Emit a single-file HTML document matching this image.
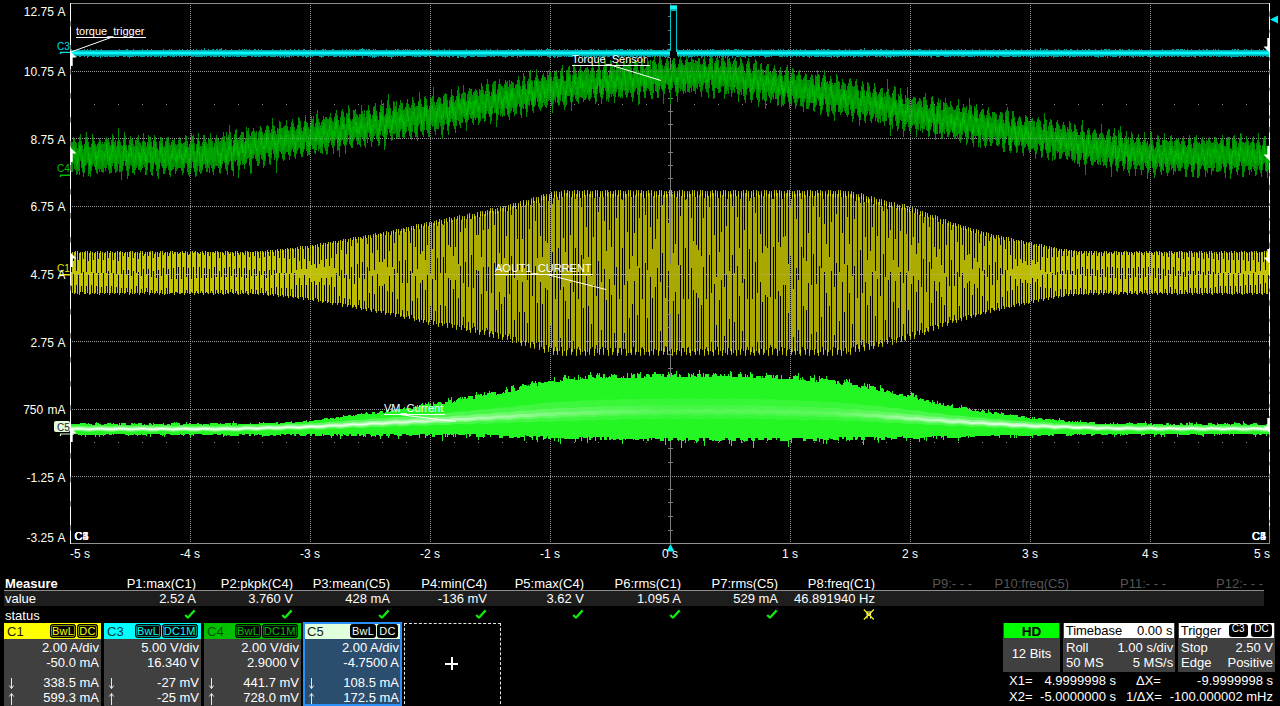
<!DOCTYPE html><html><head><meta charset="utf-8"><title>scope</title><style>
html,body{margin:0;padding:0;background:#000;}
body{width:1280px;height:706px;overflow:hidden;position:relative;font-family:"Liberation Sans",sans-serif;font-size:13px;color:#fff;line-height:15px;}
#plot{position:absolute;left:0;top:0;}
.abs{position:absolute;}
.mh,.mv,.ms{position:absolute;width:97px;text-align:right;white-space:nowrap;}
.mh{top:576px;height:14px;overflow:hidden;}
.mv{top:591px;}
.ms{top:606px;height:16px;}
.dim{color:#555;}
#mline{position:absolute;left:4px;top:590px;width:1260px;height:1px;background:#8e8e8e;}
#vbg{position:absolute;left:4px;top:591px;width:1260px;height:15px;background:#1e1e1e;}
.ch{position:absolute;top:623px;width:97px;height:83px;background:#404040;overflow:hidden;}
.ch .hd{position:absolute;left:0;top:0;width:97px;height:15.5px;}
.ch .nm{position:absolute;left:3px;top:0.5px;font-size:13px;}
.tag{position:absolute;top:.5px;height:14.5px;box-sizing:border-box;border-radius:2.5px;background:#000;font-size:11px;line-height:12.5px;text-align:center;border:1px solid #000;letter-spacing:.2px;}
.tag.nb:before{display:none;}
.tag:before{content:'';position:absolute;left:0;top:0;right:0;bottom:0;border-radius:2px;border:1px solid currentColor;opacity:.55;}
.tg{position:absolute;top:1px;height:13px;border-radius:3px;background:#000;color:#fff;font-size:10px;line-height:10px;text-align:center;}
.r{position:absolute;right:2px;white-space:nowrap;text-align:right;}
.l{position:absolute;left:3px;white-space:nowrap;}
.pn{position:absolute;top:623px;background:#404040;height:48.8px;}
.pn .hd{position:absolute;left:.7px;top:0;right:.8px;height:14.8px;background:#fff;color:#000;}
.pn .hd .l{left:2px;}
.ck{position:absolute;top:609px;}
</style></head><body>
<svg id="plot" width="1280" height="570" viewBox="0 0 1280 570">
<defs><filter id="bl" x="0" y="-1" width="1" height="3"><feGaussianBlur stdDeviation="0.6"/></filter><linearGradient id="w3" x1="70" x2="1270" y1="0" y2="0" gradientUnits="userSpaceOnUse"><stop offset="0.000" stop-color="#fff" stop-opacity="0.80"/><stop offset="0.200" stop-color="#fff" stop-opacity="0.80"/><stop offset="0.267" stop-color="#fff" stop-opacity="0.66"/><stop offset="0.333" stop-color="#fff" stop-opacity="0.42"/><stop offset="0.400" stop-color="#fff" stop-opacity="0.20"/><stop offset="0.500" stop-color="#fff" stop-opacity="0.08"/><stop offset="0.633" stop-color="#fff" stop-opacity="0.10"/><stop offset="0.667" stop-color="#fff" stop-opacity="0.20"/><stop offset="0.733" stop-color="#fff" stop-opacity="0.50"/><stop offset="0.800" stop-color="#fff" stop-opacity="0.75"/><stop offset="0.867" stop-color="#fff" stop-opacity="0.80"/><stop offset="1.000" stop-color="#fff" stop-opacity="0.80"/></linearGradient><linearGradient id="w2" x1="70" x2="1270" y1="0" y2="0" gradientUnits="userSpaceOnUse"><stop offset="0.000" stop-color="#fff" stop-opacity="0.55"/><stop offset="0.200" stop-color="#fff" stop-opacity="0.55"/><stop offset="0.267" stop-color="#fff" stop-opacity="0.42"/><stop offset="0.333" stop-color="#fff" stop-opacity="0.28"/><stop offset="0.400" stop-color="#fff" stop-opacity="0.16"/><stop offset="0.500" stop-color="#fff" stop-opacity="0.08"/><stop offset="0.633" stop-color="#fff" stop-opacity="0.10"/><stop offset="0.667" stop-color="#fff" stop-opacity="0.16"/><stop offset="0.733" stop-color="#fff" stop-opacity="0.34"/><stop offset="0.800" stop-color="#fff" stop-opacity="0.50"/><stop offset="0.867" stop-color="#fff" stop-opacity="0.55"/><stop offset="1.000" stop-color="#fff" stop-opacity="0.55"/></linearGradient><linearGradient id="w1" x1="70" x2="1270" y1="0" y2="0" gradientUnits="userSpaceOnUse"><stop offset="0.000" stop-color="#fff" stop-opacity="0.30"/><stop offset="0.200" stop-color="#fff" stop-opacity="0.30"/><stop offset="0.267" stop-color="#fff" stop-opacity="0.24"/><stop offset="0.333" stop-color="#fff" stop-opacity="0.17"/><stop offset="0.400" stop-color="#fff" stop-opacity="0.12"/><stop offset="0.500" stop-color="#fff" stop-opacity="0.08"/><stop offset="0.633" stop-color="#fff" stop-opacity="0.09"/><stop offset="0.667" stop-color="#fff" stop-opacity="0.12"/><stop offset="0.733" stop-color="#fff" stop-opacity="0.20"/><stop offset="0.800" stop-color="#fff" stop-opacity="0.28"/><stop offset="0.867" stop-color="#fff" stop-opacity="0.30"/><stop offset="1.000" stop-color="#fff" stop-opacity="0.30"/></linearGradient></defs>
<g stroke="#808080" stroke-width="1" stroke-dasharray="1 1" shape-rendering="crispEdges" fill="none"><path d="M190.5 5 V543"/><path d="M310.5 5 V543"/><path d="M430.5 5 V543"/><path d="M550.5 5 V543"/><path d="M790.5 5 V543"/><path d="M910.5 5 V543"/><path d="M1030.5 5 V543"/><path d="M1150.5 5 V543"/><path d="M72 71.5 H1269"/><path d="M72 138.5 H1269"/><path d="M72 206.5 H1269"/><path d="M72 274.5 H1269"/><path d="M72 341.5 H1269"/><path d="M72 409.5 H1269"/><path d="M72 476.5 H1269"/></g>
<g fill="#8c8c8c" shape-rendering="crispEdges"><rect x="94" y="104" width="1" height="1"/><rect x="118" y="104" width="1" height="1"/><rect x="142" y="104" width="1" height="1"/><rect x="166" y="104" width="1" height="1"/><rect x="214" y="104" width="1" height="1"/><rect x="238" y="104" width="1" height="1"/><rect x="262" y="104" width="1" height="1"/><rect x="286" y="104" width="1" height="1"/><rect x="334" y="104" width="1" height="1"/><rect x="358" y="104" width="1" height="1"/><rect x="382" y="104" width="1" height="1"/><rect x="406" y="104" width="1" height="1"/><rect x="454" y="104" width="1" height="1"/><rect x="478" y="104" width="1" height="1"/><rect x="502" y="104" width="1" height="1"/><rect x="526" y="104" width="1" height="1"/><rect x="574" y="104" width="1" height="1"/><rect x="598" y="104" width="1" height="1"/><rect x="622" y="104" width="1" height="1"/><rect x="646" y="104" width="1" height="1"/><rect x="694" y="104" width="1" height="1"/><rect x="718" y="104" width="1" height="1"/><rect x="742" y="104" width="1" height="1"/><rect x="766" y="104" width="1" height="1"/><rect x="814" y="104" width="1" height="1"/><rect x="838" y="104" width="1" height="1"/><rect x="862" y="104" width="1" height="1"/><rect x="886" y="104" width="1" height="1"/><rect x="934" y="104" width="1" height="1"/><rect x="958" y="104" width="1" height="1"/><rect x="982" y="104" width="1" height="1"/><rect x="1006" y="104" width="1" height="1"/><rect x="1054" y="104" width="1" height="1"/><rect x="1078" y="104" width="1" height="1"/><rect x="1102" y="104" width="1" height="1"/><rect x="1126" y="104" width="1" height="1"/><rect x="1174" y="104" width="1" height="1"/><rect x="1198" y="104" width="1" height="1"/><rect x="1222" y="104" width="1" height="1"/><rect x="1246" y="104" width="1" height="1"/><rect x="94" y="442" width="1" height="1"/><rect x="118" y="442" width="1" height="1"/><rect x="142" y="442" width="1" height="1"/><rect x="166" y="442" width="1" height="1"/><rect x="214" y="442" width="1" height="1"/><rect x="238" y="442" width="1" height="1"/><rect x="262" y="442" width="1" height="1"/><rect x="286" y="442" width="1" height="1"/><rect x="334" y="442" width="1" height="1"/><rect x="358" y="442" width="1" height="1"/><rect x="382" y="442" width="1" height="1"/><rect x="406" y="442" width="1" height="1"/><rect x="454" y="442" width="1" height="1"/><rect x="478" y="442" width="1" height="1"/><rect x="502" y="442" width="1" height="1"/><rect x="526" y="442" width="1" height="1"/><rect x="574" y="442" width="1" height="1"/><rect x="598" y="442" width="1" height="1"/><rect x="622" y="442" width="1" height="1"/><rect x="646" y="442" width="1" height="1"/><rect x="694" y="442" width="1" height="1"/><rect x="718" y="442" width="1" height="1"/><rect x="742" y="442" width="1" height="1"/><rect x="766" y="442" width="1" height="1"/><rect x="814" y="442" width="1" height="1"/><rect x="838" y="442" width="1" height="1"/><rect x="862" y="442" width="1" height="1"/><rect x="886" y="442" width="1" height="1"/><rect x="934" y="442" width="1" height="1"/><rect x="958" y="442" width="1" height="1"/><rect x="982" y="442" width="1" height="1"/><rect x="1006" y="442" width="1" height="1"/><rect x="1054" y="442" width="1" height="1"/><rect x="1078" y="442" width="1" height="1"/><rect x="1102" y="442" width="1" height="1"/><rect x="1126" y="442" width="1" height="1"/><rect x="1174" y="442" width="1" height="1"/><rect x="1198" y="442" width="1" height="1"/><rect x="1222" y="442" width="1" height="1"/><rect x="1246" y="442" width="1" height="1"/></g>
<g fill="#7c7c7c" shape-rendering="crispEdges"><rect x="670" y="3" width="1" height="540"/><rect x="668" y="16" width="5" height="1"/><rect x="668" y="30" width="5" height="1"/><rect x="668" y="44" width="5" height="1"/><rect x="668" y="57" width="5" height="1"/><rect x="668" y="84" width="5" height="1"/><rect x="668" y="98" width="5" height="1"/><rect x="668" y="111" width="5" height="1"/><rect x="668" y="124" width="5" height="1"/><rect x="668" y="152" width="5" height="1"/><rect x="668" y="165" width="5" height="1"/><rect x="668" y="178" width="5" height="1"/><rect x="668" y="192" width="5" height="1"/><rect x="668" y="219" width="5" height="1"/><rect x="668" y="232" width="5" height="1"/><rect x="668" y="246" width="5" height="1"/><rect x="668" y="260" width="5" height="1"/><rect x="668" y="286" width="5" height="1"/><rect x="668" y="300" width="5" height="1"/><rect x="668" y="314" width="5" height="1"/><rect x="668" y="327" width="5" height="1"/><rect x="668" y="354" width="5" height="1"/><rect x="668" y="368" width="5" height="1"/><rect x="668" y="381" width="5" height="1"/><rect x="668" y="394" width="5" height="1"/><rect x="668" y="422" width="5" height="1"/><rect x="668" y="435" width="5" height="1"/><rect x="668" y="448" width="5" height="1"/><rect x="668" y="462" width="5" height="1"/><rect x="668" y="489" width="5" height="1"/><rect x="668" y="502" width="5" height="1"/><rect x="668" y="516" width="5" height="1"/><rect x="668" y="530" width="5" height="1"/></g>
<g shape-rendering="crispEdges"><rect x="70" y="3" width="1200" height="1" fill="#8c8c8c"/><rect x="70" y="543" width="1200" height="1" fill="#929292"/><rect x="70" y="3" width="1" height="541" fill="#8c8c8c"/><rect x="1269" y="3" width="1" height="541" fill="#8c8c8c"/></g>
<g transform="translate(.5 0)" fill="none" stroke-width="1" shape-rendering="crispEdges">
<path stroke="#008c00" d="M71 142v30m1-30v30m1-35v27m1-26v31m1-27v28m1-27v32m1-27v26m1-32v29m1-34v38m1-41v27m1-20v27m1-23v27m1-23v28m1-33v29m1-36v29m1-34v33m1-28v26m1-21v34m1-29v27m1-27v30m1-33v27m1-37v32m1-29v27m1-23v26m1-23v26m1-24v27m1-29v30m1-32v27m1-31v34m1-32v29m1-25v28m1-30v30m1-28v29m1-31v26m1-29v32m1-34v31m1-29v26m1-26v31m1-28v32m1-29v28m1-33v33m1-39v32m1-30v27m1-21v27m1-29v33m1-27v26m1-31v30m1-43v36m1-24v32m1-30v30m1-27v35m1-34v25m1-33v28m1-34v29m1-25v30m1-21v26m1-21v29m1-34v31m1-36v29m1-33v29m1-26v27m1-27v34m1-29v29m1-27v29m1-35v30m1-30v28m1-31v29m1-31v35m1-28v28m1-27v29m1-27v25m1-29v27m1-35v32m1-24v26m1-25v33m1-29v29m1-33v28m1-35v28m1-26v26m1-26v35m1-30v33m1-28v29m1-36v29m1-34v28m1-26v28m1-23v29m1-23v28m1-26v29m1-38v28m1-32v26m1-26v29m1-27v29m1-21v27m1-28v28m1-33v30m1-33v30m1-31v29m1-29v33m1-27v32m1-30v32m1-35v29m1-31v30m1-30v29m1-30v28m1-23v30m1-29v26m1-27v25m1-29v28m1-31v31m1-29v29m1-25v28m1-27v31m1-32v30m1-31v26m1-33v28m1-27v28m1-23v31m1-25v28m1-31v33m1-35v31m1-40v35m1-32v26m1-27v33m1-25v29m1-21v26m1-33v32m1-38v33m1-38v33m1-25v31m1-26v28m1-28v27m1-31v28m1-35v30m1-30v29m1-25v29m1-26v30m1-28v28m1-33v29m1-29v34m1-40v32m1-26v29m1-27v31m1-25v28m1-32v26m1-31v28m1-31v31m1-28v28m1-27v29m1-26v31m1-32v33m1-36v30m1-31v27m1-32v29m1-25v27m1-21v27m1-37v39m1-34v38m1-40v30m1-40v37m1-30v29m1-22v31m1-24v25m1-31v36m1-42v27m1-31v32m1-33v31m1-22v28m1-26v38m1-41v33m1-35v30m1-33v29m1-29v33m1-33v32m1-22v27m1-31v26m1-37v36m1-32v28m1-31v30m1-24v32m1-30v38m1-42v41m1-42v28m1-31v30m1-27v24m1-22v26m1-28v30m1-22v27m1-34v34m1-36v34m1-38v29m1-27v31m1-27v28m1-25v33m1-35v33m1-36v31m1-35v27m1-28v28m1-27v31m1-27v34m1-31v32m1-36v29m1-40v32m1-25v29m1-28v34m1-29v27m1-24v39m1-45v33m1-32v29m1-37v30m1-29v30m1-24v26m1-26v31m1-32v34m1-35v34m1-35v29m1-34v32m1-26v26m1-22v25m1-24v29m1-33v29m1-34v29m1-32v30m1-26v29m1-25v30m1-26v28m1-30v25m1-29v26m1-34v32m1-31v30m1-27v33m1-26v29m1-26v26m1-30v25m1-31v28m1-34v27m1-20v29m1-28v33m1-29v28m1-26v26m1-31v26m1-34v29m1-26v30m1-33v33m1-22v26m1-30v31m1-40v36m1-40v35m1-26v32m1-29v27m1-24v28m1-31v31m1-33v34m1-38v28m1-25v29m1-31v34m1-34v38m1-36v35m1-35v28m1-30v26m1-30v28m1-23v27m1-24v27m1-26v32m1-37v29m1-33v27m1-30v29m1-24v36m1-31v30m1-25v32m1-40v29m1-35v30m1-32v31m1-28v32m1-27v29m1-22v30m1-41v32m1-31v28m1-37v30m1-27v36m1-25v27m1-25v27m1-29v29m1-38v31m1-31v29m1-30v28m1-23v27m1-26v30m1-28v27m1-30v31m1-31v33m1-42v32m1-26v27m1-24v27m1-31v36m1-29v31m1-37v28m1-29v33m1-38v28m1-23v27m1-23v27m1-22v28m1-32v27m1-35v31m1-32v30m1-33v31m1-23v28m1-23v25m1-21v26m1-34v33m1-40v30m1-35v31m1-25v30m1-33v34m1-21v34m1-36v32m1-38v30m1-38v35m1-41v35m1-24v28m1-25v28m1-21v26m1-30v29m1-39v33m1-32v32m1-28v27m1-32v38m1-27v27m1-31v29m1-32v34m1-39v31m1-28v26m1-26v34m1-27v28m1-29v29m1-31v27m1-31v29m1-33v28m1-23v27m1-24v29m1-28v30m1-33v35m1-43v35m1-32v25m1-22v30m1-26v30m1-31v31m1-31v35m1-40v25m1-34v32m1-25v32m1-27v28m1-25v28m1-28v30m1-40v33m1-34v25m1-22v31m1-25v28m1-24v28m1-31v31m1-39v31m1-31v27m1-29v31m1-40v39m1-24v29m1-26v30m1-33v27m1-30v30m1-32v32m1-32v26m1-25v28m1-23v32m1-31v35m1-43v34m1-36v31m1-32v27m1-26v30m1-24v31m1-24v28m1-35v26m1-29v25m1-33v30m1-24v27m1-26v30m1-24v27m1-29v33m1-37v30m1-36v30m1-34v35m1-28v32m1-26v29m1-34v29m1-30v30m1-38v32m1-25v27m1-26v30m1-22v30m1-37v28m1-31v29m1-32v27m1-26v29m1-29v30m1-24v28m1-31v33m1-34v27m1-29v31m1-30v28m1-26v26m1-22v29m1-36v34m1-33v31m1-38v30m1-27v33m1-29v28m1-24v28m1-31v30m1-37v30m1-35v32m1-27v30m1-23v26m1-21v28m1-32v29m1-37v30m1-32v26m1-27v32m1-32v32m1-19v33m1-38v31m1-36v31m1-36v30m1-25v32m1-30v28m1-28v31m1-29v27m1-31v32m1-36v28m1-26v27m1-28v34m1-28v30m1-37v40m1-36v29m1-32v30m1-29v26m1-25v29m1-24v28m1-31v29m1-30v30m1-34v26m1-30v28m1-24v27m1-21v29m1-26v29m1-37v27m1-35v36m1-33v28m1-20v25m1-20v28m1-36v31m1-33v26m1-34v35m1-36v31m1-21v25m1-24v30m1-24v26m1-33v27m1-30v28m1-36v29m1-23v27m1-23v28m1-26v28m1-28v30m1-33v30m1-33v32m1-34v30m1-26v28m1-28v30m1-27v28m1-37v34m1-30v26m1-31v30m1-28v29m1-24v29m1-25v32m1-36v27m1-32v28m1-29v31m1-32v27m1-21v27m1-24v27m1-27v26m1-34v30m1-33v27m1-30v37m1-26v29m1-24v29m1-29v26m1-37v35m1-35v26m1-29v29m1-30v30m1-22v28m1-21v30m1-36v27m1-36v31m1-33v31m1-26v30m1-26v28m1-24v25m1-30v32m1-35v29m1-33v32m1-27v28m1-27v27m1-26v30m1-32v30m1-32v32m1-32v30m1-31v28m1-26v31m1-26v27m1-30v28m1-31v29m1-33v25m1-21v26m1-23v27m1-20v26m1-31v29m1-33v25m1-34v26m1-23v30m1-23v27m1-18v25m1-34v29m1-32v28m1-40v33m1-28v31m1-25v35m1-29v27m1-24v27m1-32v28m1-38v34m1-33v36m1-32v29m1-25v27m1-29v36m1-33v27m1-34v29m1-29v26m1-25v33m1-31v30m1-29v31m1-30v28m1-29v31m1-38v30m1-29v30m1-25v29m1-29v32m1-32v31m1-33v29m1-34v31m1-30v33m1-25v29m1-23v28m1-34v30m1-37v31m1-32v30m1-29v27m1-25v32m1-25v35m1-33v32m1-38v26m1-32v27m1-28v27m1-21v27m1-23v29m1-30v30m1-32v25m1-33v30m1-27v28m1-24v26m1-31v35m1-26v30m1-38v38m1-39v33m1-39v30m1-22v29m1-27v28m1-23v29m1-35v35m1-41v33m1-33v29m1-26v29m1-24v26m1-22v35m1-38v28m1-31v25m1-29v25m1-33v34m1-24v28m1-21v25m1-24v35m1-40v26m1-30v28m1-35v29m1-28v31m1-21v28m1-24v28m1-29v35m1-38v29m1-34v29m1-33v36m1-31v29m1-26v28m1-26v29m1-29v26m1-31v33m1-37v28m1-25v33m1-30v30m1-30v31m1-31v26m1-37v41m1-33v27m1-26v31m1-28v28m1-31v34m1-33v27m1-27v28m1-31v26m1-26v29m1-23v28m1-27v32m1-33v26m1-31v26m1-29v27m1-22v28m1-23v26m1-25v26m1-29v34m1-40v30m1-34v26m1-27v32m1-27v33m1-21v29m1-36v35m1-37v27m1-30v30m1-34v35m1-29v33m1-25v25m1-27v26m1-34v29m1-31v30m1-31v31m1-25v38m1-36v31m1-27v27m1-38v35m1-32v35m1-36v29m1-25v28m1-23v30m1-33v29m1-32v29m1-31v34m1-36v30m1-26v28m1-21v26m1-27v35m1-37v30m1-38v35m1-33v36m1-32v26m1-23v30m1-24v28m1-27v30m1-39v31m1-34v28m1-31v30m1-26v30m1-23v31m1-27v30m1-32v29m1-36v30m1-31v29m1-33v30m1-28v37m1-28v30m1-31v38m1-37v32m1-38v29m1-30v27m1-21v31m1-30v29m1-24v26m1-31v39m1-43v35m1-37v28m1-28v32m1-24v26m1-26v31m1-29v26m1-29v26m1-29v31m1-34v28m1-24v30m1-26v26m1-22v29m1-31v30m1-35v26m1-29v28m1-24v36m1-31v29m1-24v25m1-31v29m1-34v26m1-29v26m1-28v32m1-25v30m1-21v28m1-31v26m1-31v33m1-38v28m1-27v30m1-25v29m1-23v29m1-33v30m1-31v27m1-31v28m1-29v28m1-23v31m1-27v27m1-26v27m1-29v34m1-36v26m1-29v26m1-25v35m1-29v29m1-29v29m1-29v26m1-29v26m1-29v29m1-28v28m1-24v32m1-26v27m1-37v32m1-31v29m1-35v29m1-25v27m1-26v31m1-19v28m1-33v31m1-35v32m1-35v30m1-35v29m1-23v28m1-22v30m1-31v35m1-32v33m1-36v31m1-36v29m1-26v32m1-28v30m1-28v30m1-32v38m1-38v29m1-38v31m1-29v29m1-24v31m1-30v30m1-23v26m1-30v28m1-34v33m1-30v26m1-25v28m1-27v29m1-23v25m1-29v31m1-34v32m1-36v26m1-27v32m1-29v35m1-30v36m1-35v32m1-33v27m1-32v28m1-30v30m1-24v30m1-25v27m1-19v28m1-35v29m1-34v26m1-31v33m1-30v30m1-24v31m1-25v27m1-32v25m1-34v32m1-31v28m1-25v29m1-23v29m1-24v26m1-30v26m1-30v28m1-34v31m1-27v34m1-29v26m1-22v26m1-28v29m1-31v27m1-30v34m1-35v28m1-28v33m1-24v25m1-29v33m1-30v25m1-29v29m1-42v34m1-24v29m1-23v30m1-28v39m1-38v27m1-32v36m1-39v27m1-31v29m1-28v34m1-21v26m1-23v28m1-37v35m1-33v27m1-35v32m1-26v27m1-22v30m1-25v33m1-33v27m1-36v32m1-29v26m1-37v35m1-24v29m1-27v31m1-25v27m1-33v28m1-29v27m1-29v27m1-27v28m1-27v31m1-25v33m1-35v27m1-28v29m1-32v26m1-25v32m1-30v27m1-21v26m1-36v32m1-32v32m1-36v33m1-26v30m1-25v26m1-22v28m1-29v28m1-32v26m1-33v30m1-31v27m1-22v31m1-27v29m1-20v26m1-34v28m1-32v32m1-36v26m1-21v31m1-34v33m1-23v29m1-29v29m1-37v30m1-29v31m1-36v31m1-26v29m1-27v32m1-30v30m1-30v28m1-34v31m1-27v25m1-23v26m1-23v27m1-27v29m1-30v30m1-33v30m1-31v33m1-39v35m1-26v33m1-29v31m1-31v28m1-32v27m1-31v27m1-24v26m1-25v29m1-31v39m1-32v30m1-33v29m1-41v33m1-26v27m1-26v34m1-26v29m1-27v31m1-41v30m1-28v31m1-35v32m1-26v26m1-18v29m1-33v29m1-31v36m1-38v25m1-26v29m1-29v32m1-26v31m1-28v30m1-33v31m1-36v31m1-34v30m1-24v29m1-26v30m1-28v28m1-34v31m1-31v27m1-27v25m1-24v27m1-26v31m1-25v26m1-27v27m1-31v29m1-32v27m1-27v26m1-25v35m1-28v32m1-29v29m1-40v31m1-33v28m1-31v29m1-25v34m1-23v29m1-25v27m1-34v32m1-40v31m1-31v29m1-23v28m1-23v25m1-21v27m1-32v31m1-34v28m1-30v29m1-28v25m1-21v25m1-21v28m1-28v31m1-34v26m1-33v32m1-31v28m1-27v29m1-25v29m1-29v32m1-31v29m1-32v30m1-31v31m1-28v27m1-27v30m1-24v32m1-37v32m1-35v31m1-33v27m1-24v26m1-25v30m1-24v31m1-28v27m1-33v25m1-36v30m1-24v31m1-30v33m1-22v27m1-32v34m1-38v31m1-34v33m1-32v26m1-21v36m1-33v28m1-24v28m1-32v31m1-37v29m1-31v33m1-29v28m1-26v33m1-30v30m1-30v29m1-33v29m1-32v30m1-27v27m1-24v28m1-24v27m1-32v33m1-31v27m1-35v36m1-34v28m1-22v30m1-27v29m1-30v29m1-36v39m1-38v35m1-31v25m1-22v32m1-29v29m1-29v32m1-35v28m1-35v33m1-38v33m1-22v29m1-28v33m1-26v36m1-40v29m1-34v29m1-31v29m1-27v26m1-21v26m1-21v25m1-32v33m1-35v33m1-35v33m1-32v32m1-29v27m1-23v27m1-25v26m1-31v28m1-29v32m1-41v34m1-25v29m1-27v31m1-28v27m1-25v26m1-31v33m1-37v31m1-33v29m1-29v33m1-26v31m1-25v35m1-40v27m1-31v28m1-33v31m1-24v31m1-30v35m1-26v27m1-42v38m1-35v29m1-36v35m1-29v29m1-22v27m1-23v28m1-33v31m1-33v28m1-33v26m1-18v31m1-33v36m1-29v32m1-38v31m1-37v35m1-33v27m1-21v25m1-22v26m1-27v34m1-38v31m1-32v29m1-32v31m1-27v28m1-24v28m1-25v30m1-33v28m1-30v30m1-38v31m1-25v28m1-23v25m1-27v38m1-33v27m1-29v26m1-38v35m1-35v29m1-21v28m1-23v28m1-24v29m1-31v28m1-33v27m1-34v32m1-31v27m1-24v28m1-22v27m1-27v30m1-35v30m1-30v31m1-38v31m1-24v27m1-27v33m1-32v35m1-34v31m1-32v30m1-35v29m1-30v35m1-29v27m1-22v29m1-34v30m1-31v32m1-34v27m1-26v29m1-29v32m1-29v29m1-27v27m1-30v27m1-29v28m1-31v27m1-22v28m1-24v32m1-30v30m1-32v25m1-31v28m1-32v29m1-25v26m1-21v28m1-24v29m1-34v34m1-40v33m1-33v26m1-28v29m1-22v36m1-35v35m1-36v34m1-32v25m1-30v28m1-30v28m1-25v26m1-25v29m1-26v33m1-37v31m1-30v32m1-35v30m1-31v31m1-27v27m1-25v32m1-32v28m1-29v29m1-34v31m1-31v26m1-24v33m1-30v30m1-28v28m1-29v28m1-31v31m1-33v31m1-34v29m1-24v27m1-21v27m1-27v32m1-39v28m1-30v26m1-26v27m1-27v33m1-22v31m1-30v25m1-35v30m1-33v30m1-31v33m1-29v28m1-26v31m1-25v28m1-32v27m1-32v28m1-33v29m1-28v32m1-24v35m1-35v35m1-34v29m1-30v25m1-31v30m1-27v27m1-25v29m1-25v30m1-32v27m1-28v30m1-34v29m1-31v33m1-26v28m1-22v27m1-33v32m1-35v30m1-37v33m1-24v28m1-25v28m1-24v28m1-32v25m1-32v26m1-28v27m1-27v35m1-25v26m1-23v29m1-33v25"/>
<path stroke="#00a400" d="M71 152v10m1-15v16m1-21v16m1-12v14m1-12v16m1-13v15m1-15v18m1-19v12m1-17v11m1-12v14m1-12v15m1-7v13m1-10v15m1-25v20m1-21v13m1-19v14m1-10v16m1-14v16m1-11v18m1-15v16m1-17v11m1-21v16m1-18v16m1-12v16m1-14v21m1-17v19m1-18v13m1-20v17m1-19v14m1-11v15m1-11v12m1-11v16m1-16v14m1-13v9m1-12v11m1-17v14m1-13v18m1-13v16m1-17v19m1-19v20m1-22v17m1-21v19m1-17v14m1-11v16m1-14v19m1-17v15m1-20v16m1-20v14m1-9v11m1-6v16m1-9v10m1-17v13m1-20v16m1-20v16m1-10v14m1-13v17m1-8v13m1-18v14m1-20v16m1-16v11m1-14v17m1-8v10m1-15v20m1-14v14m1-19v15m1-17v18m1-17v11m1-9v12m1-9v15m1-14v14m1-19v17m1-18v14m1-19v13m1-7v13m1-13v14m1-8v15m1-20v14m1-19v11m1-11v12m1-11v18m1-12v15m1-14v18m1-25v19m1-23v17m1-14v18m1-14v17m1-13v17m1-10v10m1-23v21m1-24v15m1-15v14m1-12v18m1-10v15m1-19v19m1-20v19m1-23v17m1-20v18m1-10v15m1-11v14m1-13v16m1-20v11m1-16v11m1-13v17m1-13v13m1-12v14m1-10v15m1-16v12m1-14v12m1-15v13m1-16v16m1-9v14m1-11v14m1-16v14m1-19v16m1-19v17m1-14v12m1-11v16m1-10v14m1-10v11m1-20v14m1-18v16m1-16v12m1-7v11m1-8v17m1-13v15m1-22v17m1-22v18m1-22v15m1-7v15m1-8v13m1-17v18m1-21v19m1-23v13m1-14v13m1-10v18m1-16v15m1-14v17m1-17v14m1-16v15m1-18v15m1-11v12m1-12v15m1-11v16m1-23v16m1-12v12m1-19v11m1-7v13m1-9v13m1-12v12m1-11v13m1-17v16m1-20v17m1-22v13m1-11v18m1-12v16m1-14v15m1-15v14m1-21v16m1-20v16m1-14v17m1-11v21m1-15v19m1-26v14m1-19v16m1-21v14m1-11v15m1-8v12m1-10v16m1-16v19m1-22v9m1-14v14m1-13v14m1-9v15m1-15v18m1-22v15m1-15v13m1-16v11m1-11v13m1-7v13m1-15v19m1-18v15m1-18v13m1-15v15m1-18v13m1-11v14m1-10v16m1-12v16m1-22v17m1-18v14m1-20v15m1-15v20m1-13v16m1-12v14m1-18v20m1-21v11m1-18v17m1-18v18m1-14v17m1-11v16m1-14v13m1-20v15m1-19v16m1-16v17m1-11v14m1-12v14m1-12v14m1-17v16m1-19v13m1-20v16m1-15v17m1-11v18m1-17v14m1-12v15m1-21v16m1-17v16m1-19v17m1-15v15m1-11v20m1-19v14m1-12v9m1-15v13m1-17v18m1-13v13m1-10v16m1-15v17m1-18v12m1-16v12m1-18v16m1-16v16m1-10v17m1-13v17m1-17v19m1-22v17m1-23v17m1-24v17m1-11v20m1-13v15m1-11v16m1-18v18m1-24v17m1-23v17m1-14v15m1-10v11m1-9v16m1-19v17m1-20v15m1-19v18m1-13v16m1-12v14m1-17v18m1-18v19m1-21v20m1-25v16m1-14v19m1-19v19m1-14v17m1-14v11m1-13v14m1-22v16m1-17v15m1-9v13m1-10v13m1-12v13m1-17v14m1-21v18m1-20v16m1-10v20m1-14v13m1-11v15m1-18v14m1-20v14m1-20v14m1-10v9m1-5v20m1-14v14m1-20v13m1-18v12m1-18v17m1-10v13m1-11v17m1-9v15m1-19v16m1-22v17m1-19v14m1-16v17m1-10v12m1-12v17m1-14v12m1-16v13m1-16v18m1-22v15m1-13v13m1-9v14m1-12v18m1-18v15m1-15v10m1-18v16m1-20v20m1-17v15m1-12v17m1-9v12m1-16v15m1-21v16m1-21v18m1-14v15m1-13v15m1-7v13m1-9v13m1-21v14m1-20v17m1-19v14m1-17v14m1-6v9m1-1v15m1-22v16m1-19v14m1-16v15m1-19v17m1-14v15m1-8v14m1-13v12m1-14v11m1-17v12m1-15v16m1-15v16m1-13v17m1-13v18m1-18v11m1-13v17m1-23v17m1-15v9m1-9v18m1-15v21m1-17v14m1-18v13m1-19v18m1-20v16m1-11v11m1-7v14m1-13v16m1-21v14m1-13v9m1-15v12m1-10v17m1-10v16m1-14v17m1-21v13m1-23v18m1-18v14m1-8v13m1-8v16m1-13v13m1-17v12m1-19v15m1-16v11m1-10v18m1-13v13m1-8v15m1-20v16m1-17v12m1-17v15m1-16v17m1-12v10m1-10v14m1-15v19m1-16v13m1-17v12m1-15v13m1-14v17m1-16v16m1-13v16m1-12v13m1-21v15m1-16v11m1-14v18m1-14v15m1-11v18m1-14v16m1-21v16m1-20v15m1-20v16m1-11v16m1-15v16m1-12v13m1-14v17m1-19v16m1-21v14m1-17v14m1-7v12m1-11v13m1-16v15m1-18v16m1-14v13m1-14v17m1-13v14m1-9v13m1-17v11m1-15v12m1-15v11m1-10v11m1-7v15m1-17v14m1-13v18m1-20v17m1-23v16m1-14v16m1-11v12m1-9v17m1-17v15m1-23v17m1-19v11m1-11v18m1-11v12m1-10v17m1-18v15m1-22v14m1-20v14m1-10v15m1-9v17m1-9v9m1-16v16m1-20v13m1-19v17m1-15v12m1-9v13m1-4v12m1-19v15m1-20v13m1-17v14m1-9v11m1-7v13m1-10v12m1-16v15m1-19v11m1-15v17m1-14v14m1-12v18m1-16v19m1-21v15m1-18v17m1-17v13m1-14v14m1-9v13m1-13v15m1-10v10m1-18v17m1-22v13m1-13v13m1-12v13m1-4v11m1-12v16m1-25v17m1-17v8m1-7v15m1-11v13m1-9v15m1-19v14m1-20v16m1-18v11m1-12v13m1-11v19m1-11v15m1-12v11m1-15v9m1-18v21m1-25v16m1-12v15m1-11v14m1-14v18m1-13v12m1-19v15m1-22v17m1-12v14m1-14v16m1-10v11m1-14v17m1-17v14m1-20v18m1-17v13m1-13v15m1-11v17m1-15v16m1-19v16m1-16v15m1-21v18m1-17v16m1-11v17m1-13v18m1-19v14m1-20v16m1-22v14m1-12v15m1-9v13m1-7v15m1-14v11m1-21v17m1-22v16m1-16v13m1-9v15m1-8v10m1-7v17m1-22v14m1-17v10m1-14v12m1-12v15m1-8v13m1-14v18m1-19v16m1-21v14m1-15v13m1-13v17m1-12v16m1-14v11m1-12v15m1-18v15m1-18v15m1-14v18m1-14v14m1-14v19m1-22v18m1-21v18m1-23v15m1-7v13m1-10v14m1-7v14m1-23v17m1-18v11m1-18v14m1-11v15m1-8v15m1-8v12m1-20v16m1-18v15m1-24v15m1-13v15m1-8v12m1-11v15m1-11v16m1-25v16m1-19v18m1-16v11m1-10v16m1-15v19m1-16v16m1-14v15m1-21v15m1-17v10m1-5v11m1-11v15m1-13v13m1-11v13m1-22v21m1-20v15m1-16v15m1-11v16m1-13v14m1-16v17m1-22v16m1-17v10m1-8v14m1-14v17m1-10v16m1-16v13m1-18v14m1-21v11m1-10v15m1-9v13m1-8v12m1-13v18m1-23v13m1-21v19m1-15v11m1-9v18m1-12v17m1-18v14m1-18v17m1-24v12m1-11v17m1-12v15m1-15v20m1-14v14m1-14v11m1-20v16m1-20v18m1-13v16m1-14v14m1-11v20m1-21v15m1-19v20m1-23v14m1-10v14m1-11v17m1-13v13m1-15v15m1-20v14m1-17v14m1-16v15m1-10v14m1-8v16m1-16v14m1-18v15m1-23v16m1-17v15m1-12v15m1-9v14m1-11v16m1-13v17m1-21v9m1-16v13m1-12v12m1-14v19m1-17v16m1-10v20m1-23v17m1-21v20m1-24v17m1-12v15m1-10v12m1-13v16m1-17v14m1-19v13m1-11v14m1-10v12m1-12v16m1-14v13m1-17v13m1-17v15m1-15v14m1-8v10m1-9v11m1-8v11m1-14v14m1-20v16m1-19v14m1-10v16m1-13v16m1-13v15m1-18v13m1-18v16m1-23v17m1-8v11m1-11v18m1-11v16m1-18v16m1-23v18m1-20v16m1-15v13m1-9v18m1-15v18m1-16v11m1-14v12m1-19v16m1-11v13m1-16v19m1-14v17m1-12v14m1-18v15m1-19v15m1-18v15m1-13v14m1-5v11m1-11v12m1-16v16m1-18v18m1-21v17m1-14v13m1-10v17m1-14v15m1-19v14m1-14v12m1-17v16m1-13v14m1-7v14m1-10v13m1-14v13m1-18v15m1-20v17m1-21v16m1-11v17m1-13v19m1-13v18m1-20v16m1-21v17m1-19v15m1-18v12m1-5v10m1-9v14m1-10v17m1-22v14m1-16v13m1-16v16m1-9v14m1-13v15m1-13v13m1-17v10m1-11v17m1-18v12m1-14v18m1-10v11m1-11v13m1-15v16m1-17v17m1-18v15m1-18v18m1-16v14m1-10v15m1-7v12m1-16v15m1-19v14m1-18v12m1-11v15m1-8v13m1-11v14m1-17v16m1-20v13m1-17v14m1-12v18m1-14v19m1-11v18m1-26v21m1-21v15m1-18v11m1-11v16m1-14v19m1-12v16m1-18v14m1-15v12m1-20v16m1-13v19m1-17v18m1-11v11m1-11v14m1-18v18m1-17v14m1-20v15m1-10v9m1-5v16m1-15v12m1-15v17m1-20v17m1-20v15m1-11v14m1-13v19m1-9v12m1-19v15m1-19v14m1-21v21m1-17v18m1-14v15m1-6v12m1-13v17m1-22v18m1-21v13m1-20v13m1-10v21m1-15v17m1-7v15m1-18v11m1-17v13m1-17v12m1-12v15m1-7v14m1-14v19m1-15v13m1-15v12m1-18v15m1-20v19m1-12v14m1-13v18m1-13v14m1-15v13m1-15v7m1-10v13m1-12v12m1-9v15m1-14v17m1-16v12m1-18v16m1-18v13m1-9v12m1-9v15m1-11v15m1-17v15m1-16v10m1-16v15m1-15v10m1-8v15m1-8v14m1-8v16m1-22v14m1-16v10m1-18v14m1-9v14m1-12v21m1-15v16m1-24v18m1-20v13m1-12v12m1-8v9m1-7v11m1-9v17m1-16v14m1-18v15m1-21v15m1-15v17m1-8v12m1-11v13m1-13v16m1-22v19m1-19v15m1-13v12m1-12v16m1-10v12m1-11v16m1-19v13m1-15v12m1-20v18m1-12v14m1-9v15m1-12v18m1-17v16m1-22v17m1-23v18m1-14v14m1-10v13m1-10v13m1-7v14m1-20v17m1-21v13m1-16v15m1-13v16m1-13v14m1-8v13m1-11v14m1-21v16m1-14v14m1-22v15m1-12v18m1-11v13m1-7v12m1-21v19m1-16v11m1-15v9m1-7v15m1-13v15m1-11v14m1-19v19m1-20v14m1-17v14m1-11v11m1-9v16m1-12v16m1-19v14m1-17v17m1-19v13m1-12v16m1-10v14m1-9v16m1-18v13m1-16v14m1-22v19m1-21v16m1-9v17m1-12v12m1-4v13m1-20v15m1-20v13m1-17v16m1-10v17m1-15v17m1-10v14m1-16v13m1-22v17m1-18v15m1-16v16m1-12v14m1-10v16m1-16v19m1-20v12m1-12v14m1-14v12m1-13v19m1-15v13m1-13v19m1-20v12m1-16v14m1-15v15m1-14v15m1-9v15m1-14v13m1-10v11m1-19v15m1-18v13m1-12v16m1-12v19m1-11v10m1-12v15m1-21v15m1-19v14m1-15v17m1-11v16m1-13v13m1-9v16m1-28v20m1-21v15m1-14v17m1-11v14m1-10v12m1-10v13m1-19v18m1-22v16m1-18v16m1-8v15m1-14v15m1-12v17m1-19v17m1-19v13m1-16v12m1-6v14m1-13v15m1-16v15m1-15v16m1-16v11m1-15v9m1-11v17m1-10v12m1-9v13m1-15v19m1-21v13m1-17v14m1-17v16m1-8v12m1-12v18m1-12v14m1-23v19m1-23v18m1-19v13m1-8v15m1-5v14m1-11v13m1-18v11m1-20v18m1-20v16m1-11v15m1-12v17m1-12v16m1-18v13m1-16v14m1-13v10m1-18v19m1-12v14m1-12v16m1-9v10m1-18v14m1-15v16m1-23v21m1-13v16m1-13v17m1-15v12m1-11v14m1-19v13m1-14v12m1-13v14m1-12v16m1-8v11m1-14v9m1-16v15m1-17v14m1-11v15m1-13v16m1-11v17m1-11v12m1-22v14m1-19v13m1-9v12m1-11v20m1-14v15m1-14v14m1-17v14m1-20v14m1-16v15m1-10v17m1-13v14m1-9v11m1-20v19m1-17v8m1-17v19m1-12v14m1-9v13m1-13v17m1-19v15m1-16v12m1-15v11m1-8v14m1-12v14m1-10v10m1-10v16m1-21v15m1-17v17m1-17v15m1-13v17m1-13v19m1-18v15m1-20v17m1-22v18m1-15v17m1-8v15m1-12v16m1-18v17m1-18v12m1-18v11m1-15v16m1-6v12m1-13v19m1-16v19m1-22v17m1-19v14m1-18v14m1-7v13m1-10v12m1-11v15m1-18v18m1-22v16m1-15v10m1-14v18m1-13v17m1-15v17m1-13v13m1-13v11m1-16v12m1-13v12m1-13v16m1-15v16m1-9v15m1-22v21m1-17v13m1-19v18m1-19v15m1-13v18m1-11v18m1-17v20m1-24v14m1-16v14m1-18v11m1-5v15m1-9v15m1-16v18m1-20v11m1-17v16m1-20v13m1-9v14m1-10v17m1-10v14m1-20v18m1-20v12m1-14v13m1-8v13m1-13v16m1-11v14m1-18v15m1-19v19m1-21v15m1-11v13m1-12v15m1-11v15m1-18v11m1-13v18m1-24v17m1-11v13m1-10v15m1-11v12m1-18v17m1-18v15m1-19v15m1-12v14m1-12v17m1-14v17m1-15v19m1-19v9m1-12v13m1-17v11m1-8v16m1-15v18m1-11v12m1-13v12m1-16v13m1-20v13m1-13v13m1-11v20m1-14v14m1-13v17m1-18v12m1-22v19m1-22v18m1-8v16m1-14v19m1-12v14m1-20v10m1-15v14m1-18v19m1-15v16m1-13v15m1-13v17m1-17v14m1-16v13m1-22v19m1-18v19m1-12v15m1-12v16m1-15v16m1-19v14m1-16v15m1-20v15m1-10v17m1-12v14m1-14v17m1-19v14m1-19v15m1-21v15m1-7v12m1-8v15m1-10v16m1-22v15m1-16v15m1-22v17m1-14v14m1-7v13m1-12v17m1-14v12m1-14v7m1-15v12m1-15v16m1-11v13m1-11v18m1-15v16m1-20v16m1-18v18m1-19v10m1-10v16m1-13v16m1-16v16m1-16v15m1-15v13m1-17v14m1-15v15m1-12v15m1-13v14m1-12v15m1-14v15m1-21v16m1-20v16m1-14v15m1-12v17m1-11v13m1-8v14m1-24v12m1-21v17m1-14v18m1-11v16m1-12v15m1-15v19m1-21v13m1-23v18m1-19v18m1-12v16m1-12v17m1-14v19m1-23v17m1-21v16m1-22v18m1-10v9m1-8v15m1-13v13m1-13v13m1-18v16m1-16v18m1-19v16m1-14v18m1-12v13m1-15v19m1-18v12m1-21v17m1-16v19m1-11v14m1-11v14m1-16v13m1-20v17m1-19v11m1-9v19m1-12v16m1-16v18m1-24v20m1-24v18m1-20v16m1-7v14m1-11v16m1-11v14m1-20v12"/>
<path stroke="#00bc00" d="M72 154v3m2-9v8m3 2v7m2-19v7m1-6v3m1 4v1m1 1v8m1 2v2m5-15v6m1 0v7m1-7v6m5-13v7m1-3v9m1-9v3m1-9v7m4 1v1m2-5v4m2-14v6m1 1v8m1-2v1m1-1v4m1-6v5m1-8v4m1-12v8m1-5v3m3 5v4m2-10v1m2 6v2m3-8v9m1-14v5m2 4v8m2-9v6m1-5v2m1-9v4m1-2v7m2 0v1m2-2v5m3-8v5m1-4v8m1-5v8m2-11v5m1-9v3m1 0v3m1-1v9m1-7v6m4-11v6m2-1v4m3-11v8m5-9v6m1-5v3m1 2v6m2-1v3m1-9v3m2-5v1m2 5v2m2-5v4m1-8v9m3-2v4m1-7v7m1-5v3m2-9v7m2-2v5m2-2v5m1-9v4m1-8v7m1-8v4m3 5v6m1-10v3m2-11v3m1 2v3m1 6v2m3-14v7m1-8v2m1 3v5m1 4v1m1-2v1m1-8v8m1-7v1m1-10v8m1 0v8m2-2v6m10-18v8m1-2v2m2-2v13m1-13v4m1-9v2m3 5v5m1-5v7m1-11v5m1-10v5m1-8v6m1 0v1m1 2v9m2-12v7m1-11v6m3-8v12m1-4v6m1-5v4m2-15v8m1-5v8m1-3v4m1 2v1m1-14v13m3-11v4m2 2v4m1-5v2m3-13v7m1-1v5m1-1v3m5-14v8m2 1v3m1-3v3m1-4v2m1-12v10m1-8v5m2 6v2m2-9v2m1-8v6m2-2v6m1-2v6m1 0v2m1-10v6m1-8v3m2-7v4m4-1v7m1-10v6m1-6v2m3 9v1m3-17v11m1-7v6m1 1v2m1 0v6m2-12v4m2-8v1m1 1v5m3-2v2m2-12v5m1 3v1m2 4v4m1-3v5m1-12v5m1-9v1m4 4v5m1-8v8m1-13v4m1-2v5m1 1v3m1-1v2m1-4v6m2-16v9m1-5v4m2 4v2m1-8v5m1-3v1m1-9v6m3-2v8m2-6v4m1-14v7m1-9v8m2 7v5m1-1v1m1-8v6m1-11v2m1-6v4m1-2v4m2 2v7m3-20v5m1 2v5m1-1v3m1 4v1m1-4v1m1-7v1m2-6v2m1-2v11m1-6v6m1-3v2m1-5v7m1-10v4m1-7v8m2-3v2m1 1v2m1-1v6m2-15v6m2-10v8m1 0v8m3-8v2m1-7v1m1-3v3m3 11v3m1-11v7m1-17v12m2-10v5m2 5v7m1-8v9m1-15v7m1-10v7m2-7v7m2 1v7m1-12v10m1-13v6m1-10v6m1 1v4m4-6v6m1-8v5m1-5v7m1-4v5m1-1v4m1-4v5m3-17v6m1 1v4m2 3v2m3-14v3m1 2v1m3-2v4m3-8v6m1 1v6m3-17v9m2-9v9m6-11v4m1 2v3m2 4v3m1-10v7m1-11v8m2-10v5m2 4v4m1-1v1m1-9v7m3-10v8m1-2v5m1 1v5m1-14v5m1-4v1m1-13v10m1-6v10m1-5v7m2-3v7m3-22v11m1-4v6m2-2v5m2-14v5m1-2v6m1 0v3m1 0v6m1-10v8m1-14v9m2-8v7m2 2v4m1-8v7m1-13v6m1-6v5m1-7v4m2 2v7m1-5v3m3-8v2m3-1v6m1-12v6m3 0v1m1 5v3m1-6v2m2-19v11m1-6v9m1-6v4m1 7v5m2-16v5m1-10v6m2 0v7m1-3v6m1-10v5m1-7v3m2-8v9m1-3v6m1-2v6m2-14v8m1-11v7m1-8v9m5-5v1m2-3v5m2 7v1m1-14v5m1-8v3m1 3v1m2 5v7m1-9v4m1-10v4m1-11v10m2-3v4m1-4v12m1-5v8m1-15v9m2-19v5m1 2v4m2 1v3m1-3v8m2-16v4m2 0v9m1-6v2m2-6v4m3-4v3m3-1v6m3-15v6m1-4v6m1 2v6m2-13v9m1-15v7m4 6v7m1-14v10m2-17v4m2 7v4m1-3v8m3-21v8m1-2v2m2 3v7m2-17v2m1-1v10m2-6v6m1-5v4m2-5v4m4 1v5m1-7v4m1-9v4m2-4v1m2 7v5m1-8v4m1-8v8m2-12v8m1-5v5m1 3v6m1-10v5m2-20v10m1 0v2m1-2v6m1-3v10m1-10v9m2-15v2m1-6v9m2 0v5m1-2v4m1-7v6m1-10v4m1-5v5m2-2v1m2 1v6m3-15v7m1 0v5m4-12v2m1 1v5m2 0v7m1-9v8m1-9v1m3 2v2m3-6v8m2-12v4m1 1v4m1-1v8m1-5v1m1-7v8m1-13v4m1-5v6m3 2v5m2-10v3m2-5v4m1 8v1m1-10v7m1-6v5m3-11v10m4-4v7m2-15v8m3 2v7m1-9v6m2-16v5m3 6v7m1-6v7m1-8v4m3-10v5m2 2v6m4-12v8m2-4v6m1-7v3m3-4v1m1 2v6m1-2v1m4-10v6m1-4v5m3-4v1m1-10v12m2 2v2m1-2v3m1-11v9m4-6v4m3-9v4m1-8v6m3 4v7m1-7v4m1-6v3m1-7v1m1-1v4m1-3v9m2-2v5m1-9v4m1-5v1m1-3v2m1 2v5m3-8v8m2-12v8m1-2v6m1-4v7m6-6v7m2-3v7m4-15v3m1 2v8m1 2v3m1-7v5m1-10v5m1-9v8m3-3v6m1-4v9m2-14v4m3 2v4m1-1v4m1-8v3m1-9v8m2-6v6m3 2v4m1-8v4m1-9v9m1-6v1m1 0v5m3 0v6m1-10v1m1-7v6m1-1v9m1-5v9m1-6v8m1-9v4m4-4v5m2-3v2m2-10v3m4 5v7m5-5v1m3-3v4m1-8v5m2 3v3m2-7v9m3-10v8m2-6v12m2-15v4m2-6v6m2 2v12m1-6v1m1-7v6m2-17v7m1-1v4m2 11v3m3-19v4m1-5v10m1-2v4m1 0v3m4-9v2m3 4v6m1-7v4m1-6v2m1-7v9m1-9v10m1-3v7m1-1v3m2-10v3m4 2v6m5-7v1m2 10v2m1-14v7m1-4v1m1-11v6m6-3v3m1 4v1m1-1v4m4-7v3m1-5v11m1-7v5m3-2v6m1-11v10m1-10v5m1-2v8m1-2v1m3-4v3m4 4v5m1-7v5m1-10v7m1-9v2m1-4v6m1-5v6m1 5v3m1 1v2m1-6v2m1-7v4m1-12v6m1-2v3m1 1v6m2 5v2m1-11v7m1-6v3m1-10v9m2 2v3m2-8v7m4-4v3m2-6v9m1-8v4m1-6v1m2 1v8m2-5v8m3-11v6m1-1v4m1-1v11m1-12v5m3-14v6m1-1v6m1-2v5m1 1v8m1-13v2m1-12v13m1-9v1m1 0v5m2 4v1m1-1v4m1-9v3m2-4v1m1-1v1m1 3v6m3-9v5m1-9v10m2-3v5m1-5v10m1-9v6m1-10v2m1-4v4m3 2v8m1-6v2m1-8v8m1-13v9m1-2v5m2 1v4m1-4v6m3-17v4m2 11v4m1-8v7m2-16v4m1-4v5m2 5v8m2-10v1m2-8v4m1 4v1m2 3v7m1-9v1m1-10v9m1-6v5m2 2v3m1-1v3m4-7v4m2-1v2m1 1v2m1-9v8m1-8v1m1-1v4m1-1v3m1 0v3m5-8v5m2 6v11m1-21v7m2-10v5m1-5v9m1-6v10m1-2v9m1-11v1m1-3v3m1-8v5m2-3v3m1-1v10m1-3v2m1-7v6m1-11v6m1-8v8m2-3v7m1-2v2m1-1v3m1-9v4m3 4v1m1 2v1m4-8v4m1-4v5m2 3v7m1-11v1m3-4v6m1 1v3m4-15v6m1-2v4m3 1v2m1-6v4m1-5v3m2 0v5m1 0v5m1-10v9m2-11v3m3 4v6m3-10v1m1-4v3m1 2v5m2 1v3m4-7v8m1-7v6m4-13v6m1-4v12m2 1v6m1-12v9m2-20v10m4 6v2m1-7v3m1-5v5m2-6v8m1-4v6m3-10v4m1-4v1m4 9v1m1-5v5m1-14v9m5 0v7m1-11v8m1-13v3m1 3v10m1 1v3m1-4v4m1-9v7m1-10v4m1-14v9m1 2v3m2 5v5m1-11v6m1-12v5m1-8v4m1 5v5m1-1v6m1-3v1m1-5v6m1-12v7m2-7v6m1-1v7m1-3v4m2-11v5m2-7v5m1-1v2m1-2v8m1-6v7m3-12v3m2 9v2m1-6v1m1-5v6m2-14v6m1 4v3m1 0v3m2-3v6m1-8v2m1-8v2m1-3v1m1 4v4m2-1v10m1-14v2m2-7v4m2 2v5m1-1v6m1-4v1m1-8v2m1-7v6m1-6v7m2 3v7m1-10v6m1-10v6m1-4v5m1-8v5m1-2v7m1-4v3m2-4v5m1-10v4m1-7v8m3 5v2m1-8v4m3-8v1m3 3v11m4-10v1m1-2v10m1-5v1m2-8v3m1-6v3m1 1v1m1 2v5m3-10v5m3-3v4m4-8v4m1 0v1m1-3v2m3 2v5m3-15v7m1 4v1m6-5v9m1 0v3m1-9v10m1-14v6m1-7v2m2-1v4m1 4v1m2-8v5m1-4v7m1-14v5m2 7v1m2-2v4m3-12v7m5-7v8m2-2v5m1 1v2m1-6v1m3-8v10m1-5v5m1-4v8m1-8v1m2-9v5m2 3v5m1-1v7"/>
<path stroke="#00a6aa" d="M71 49v8m1-7v7m1-7v7m1-7v7m1-7v7m1-7v7m1-7v6m1-7v7m1-6v7m1-7v7m1-7v6m1-6v6m1-6v6m1-7v8m1-7v6m1-6v6m1-7v9m1-8v7m1-7v6m1-7v7m1-6v6m1-6v7m1-7v7m1-7v7m1-7v6m1-7v8m1-7v7m1-7v7m1-7v6m1-6v8m1-9v7m1-6v7m1-7v6m1-6v7m1-7v7m1-7v7m1-7v7m1-7v6m1-6v7m1-7v7m1-7v7m1-7v7m1-7v7m1-7v7m1-7v6m1-6v7m1-7v7m1-7v7m1-8v7m1-6v6m1-6v6m1-6v6m1-6v7m1-7v7m1-7v7m1-8v7m1-7v8m1-7v7m1-7v8m1-8v7m1-7v7m1-7v7m1-8v8m1-7v6m1-6v7m1-7v6m1-6v6m1-6v7m1-7v6m1-6v7m1-7v7m1-8v8m1-7v7m1-7v7m1-7v6m1-6v6m1-7v8m1-7v7m1-7v6m1-6v7m1-8v8m1-7v6m1-6v6m1-6v7m1-7v7m1-7v7m1-7v6m1-6v7m1-7v6m1-6v8m1-8v7m1-7v6m1-7v8m1-7v7m1-7v7m1-7v7m1-7v6m1-6v6m1-7v7m1-6v7m1-8v7m1-6v7m1-7v7m1-7v7m1-7v6m1-6v7m1-7v6m1-6v6m1-7v8m1-7v6m1-6v7m1-8v8m1-7v6m1-6v6m1-6v7m1-7v6m1-7v8m1-7v6m1-6v6m1-7v7m1-6v7m1-7v7m1-8v8m1-7v6m1-6v7m1-8v8m1-7v7m1-7v7m1-7v7m1-7v7m1-8v8m1-7v7m1-7v6m1-8v9m1-7v6m1-6v7m1-7v6m1-7v7m1-6v6m1-6v7m1-7v7m1-8v7m1-7v8m1-7v7m1-7v7m1-8v8m1-8v7m1-6v7m1-8v8m1-8v7m1-8v8m1-6v7m1-7v7m1-7v8m1-9v7m1-6v7m1-7v6m1-6v7m1-7v7m1-7v7m1-8v7m1-6v7m1-7v6m1-6v7m1-7v6m1-6v7m1-7v7m1-7v7m1-8v8m1-7v6m1-6v7m1-8v8m1-7v7m1-8v8m1-7v7m1-8v8m1-7v6m1-6v6m1-7v7m1-6v6m1-6v7m1-7v7m1-7v6m1-7v8m1-8v8m1-7v7m1-7v6m1-7v8m1-7v7m1-7v7m1-8v7m1-6v7m1-7v6m1-6v6m1-6v6m1-6v7m1-7v7m1-7v6m1-6v6m1-6v7m1-7v7m1-8v8m1-7v7m1-7v7m1-7v7m1-7v6m1-6v7m1-7v6m1-6v7m1-8v9m1-8v6m1-6v7m1-7v6m1-6v8m1-9v7m1-6v7m1-7v7m1-7v7m1-7v8m1-9v7m1-6v7m1-7v6m1-6v7m1-8v7m1-6v6m1-6v6m1-6v7m1-8v8m1-7v6m1-6v6m1-6v6m1-6v7m1-8v8m1-8v7m1-6v7m1-7v8m1-8v7m1-7v7m1-7v6m1-6v7m1-7v6m1-6v7m1-7v6m1-6v6m1-7v7m1-6v6m1-6v6m1-6v6m1-6v7m1-7v7m1-7v8m1-9v8m1-8v8m1-7v6m1-7v7m1-6v6m1-6v6m1-6v7m1-7v6m1-6v6m1-6v6m1-7v7m1-7v8m1-7v7m1-7v7m1-7v7m1-7v6m1-6v6m1-6v7m1-7v7m1-7v6m1-7v8m1-7v7m1-7v7m1-7v6m1-7v9m1-8v6m1-6v6m1-7v8m1-7v7m1-8v7m1-6v6m1-6v7m1-8v7m1-6v7m1-7v6m1-6v6m1-6v6m1-7v7m1-7v7m1-7v7m1-8v10m1-9v7m1-7v7m1-6v6m1-7v7m1-6v6m1-7v8m1-8v7m1-6v7m1-7v6m1-6v8m1-9v8m1-7v8m1-9v8m1-7v7m1-7v6m1-6v7m1-7v6m1-6v6m1-6v6m1-6v7m1-7v7m1-7v6m1-6v7m1-8v7m1-6v7m1-7v7m1-7v7m1-7v7m1-7v9m1-9v7m1-7v7m1-7v6m1-7v8m1-7v6m1-7v8m1-8v7m1-6v6m1-6v7m1-7v6m1-6v6m1-7v8m1-7v7m1-8v8m1-7v6m1-7v7m1-6v6m1-7v7m1-6v6m1-6v6m1-6v7m1-7v6m1-6v7m1-8v8m1-7v7m1-7v6m1-7v8m1-7v7m1-7v7m1-7v6m1-7v7m1-6v6m1-6v7m1-7v7m1-8v8m1-7v6m1-6v6m1-6v7m1-7v6m1-7v7m1-6v6m1-6v6m1-6v6m1-6v6m1-6v7m1-7v7m1-8v8m1-7v6m1-6v6m1-6v7m1-7v7m1-7v6m1-7v8m1-7v7m1-7v6m1-6v7m1-7v7m1-8v9m1-8v6m1-6v6m1-6v7m1-7v7m1-7v6m1-6v6m1-6v6m1-6v8m1-8v8m1-8v6m1-6v7m1-7v7m1-7v7m1-7v7m1-7v8m1-8v8m1-9v8m1-7v6m1-6v6m1-6v6m1-6v7m1-7v7m1-7v7m1-7v7m1-7v7m1-7v6m1-7v7m1-6v7m1-7v7m1-8v8m1-7v7m1-7v7m1-7v7m1-7v7m1-7v7m1-7v7m1-8v8m1-7v6m1-6v6m1-6v6m1-7v8m1-7v7m1-7v6m1-6v7m1-7v7m1-7v6m1-6v6m1-7v7m1-6v7m1-7v6m1-6v6m1-6v6m1-6v7m1-7v7m1-7v7m1-7v8m1-8v7m1-7v7m1-8v7m1-6v6m1-6v6m1-7v8m1-7v7m1-7v7m1-7v6m1-6v6m1-6v6m1-7v9m1-9v7m1-6v7m1-7v7m1-7v7m1-7v6m1-6v6m1-7v7m1-6v7m1-7v6m1-6v6m1-6v7m1-7v6m1-6v6m1-6v6m1-6v6m1-6v6m1-6v7m1-7v6m1-7v7m1-6v6m1-6v7m1-8v8m1-7v6m1-7v8m1-7v6m1-6v6m1-6v6m1-6v6m1-7v7m1-8v9m1-8v8m1-8v9m1-9v8m1-7v6m1-6v6m1-7v8m1-7v8m1-8v7m1-7v6m1-6v8m1-8v7m1-8v8m1-7v7m1-7v7m1-7v6m1-6v6m1-7v8m1-7v6m1-6v7m1-8v7m1-6v7m1-7v7m1-7v7m1-7v7m1-7v7m1-7v6m1-6v7m1-8v8m1-7v6m1-7v7m1-6v6m1-6v7m1-7v6m1-7v7m1-6v7m1-7v6m1-6v7m1-7v6m1-6v7m1-7v7m1-7v7m1-7v6m1-7v8m1-8v8m1-7v6m1-7v8m1-7v7m1-7v6m1-6v8m1-8v6m1-7v7m1-6v7m1-7v7m1-7v6m1-6v7m1-7v7m1-7v7m1-7v7m1-8v7m1-6v7m1-7v7m1-7v7m1-7v6m1-6v6m1-6v6m1-6v7m1-8v8m1-8v7m1-6v6m1-6v7m1-8v9m1-8v7m1-8v7m1-7v8m1-8v8m1-7v6m1-6v7m1-7v6m1-6v6m1-7v7m1-6v7m1-8v7m1-7v8m1-7v7m1-7v7m1-7v7m1-7v6m1-7v7m1-6v8m1-8v7m1-8v7m1-6v7m1-8v8m1-7v7m1-8v7m1-6v7m1-7v7m1-7v6m1-6v6m1-7v8m1-7v7m1-7v7m1-8v8m1-8v7m1-6v7m1-7v6m1-6v6m1-6v7m1-7v6m1-6v7m1-7v6m1-6v7m1-7v7m1-7v6m1-6v7m1-8v7m1-6v7m1-7v8m1-8v7m1-8v7m1-7v8m1-8v7m8-7v7m1-6v7m1-7v6m1-6v7m1-7v7m1-7v6m1-7v8m1-7v7m1-7v6m1-6v6m1-7v7m1-6v8m1-9v8m1-7v7m1-7v7m1-7v7m1-7v6m1-7v8m1-7v6m1-6v6m1-6v7m1-8v7m1-6v6m1-6v6m1-7v9m1-8v7m1-7v6m1-6v7m1-7v6m1-6v6m1-7v8m1-7v6m1-6v7m1-8v8m1-7v6m1-7v8m1-8v7m1-6v6m1-6v7m1-7v6m1-6v7m1-7v6m1-6v8m1-8v6m1-6v7m1-7v7m1-8v8m1-7v6m1-6v8m1-9v7m1-6v6m1-7v8m1-7v6m1-6v6m1-6v6m1-6v8m1-8v6m1-7v7m1-7v7m1-7v8m1-7v7m1-8v8m1-7v7m1-7v6m1-6v7m1-8v8m1-7v7m1-7v7m1-7v8m1-8v6m1-6v6m1-6v7m1-7v7m1-7v7m1-7v7m1-8v7m1-6v6m1-6v7m1-7v6m1-6v6m1-6v6m1-6v6m1-6v7m1-7v6m1-7v7m1-6v6m1-6v6m1-6v7m1-7v8m1-8v7m1-7v7m1-7v7m1-7v7m1-7v6m1-7v8m1-7v6m1-7v7m1-6v6m1-6v6m1-6v6m1-6v6m1-7v7m1-6v7m1-8v8m1-7v7m1-7v7m1-8v7m1-6v7m1-7v6m1-6v7m1-7v7m1-8v7m1-6v6m1-6v7m1-7v6m1-6v7m1-8v7m1-6v6m1-6v6m1-7v8m1-7v6m1-6v6m1-6v7m1-8v7m1-6v6m1-6v7m1-7v7m1-7v7m1-8v7m1-6v6m1-6v7m1-7v7m1-7v8m1-8v6m1-6v7m1-7v6m1-6v6m1-6v7m1-7v7m1-8v8m1-7v7m1-8v8m1-7v6m1-6v7m1-8v7m1-6v7m1-8v8m1-8v8m1-7v6m1-6v7m1-8v8m1-8v8m1-7v7m1-7v7m1-7v8m1-8v6m1-6v7m1-7v7m1-7v6m1-6v7m1-7v8m1-8v7m1-8v8m1-7v6m1-6v6m1-6v7m1-7v6m1-6v7m1-8v8m1-7v6m1-6v7m1-7v6m1-7v7m1-6v7m1-7v6m1-6v6m1-6v8m1-8v7m1-7v7m1-7v6m1-6v6m1-6v7m1-7v6m1-7v8m1-8v8m1-7v7m1-7v6m1-8v8m1-6v6m1-6v7m1-7v7m1-7v6m1-6v7m1-7v6m1-6v6m1-7v7m1-6v6m1-6v6m1-6v7m1-8v8m1-7v7m1-7v6m1-6v7m1-8v8m1-8v7m1-6v6m1-6v7m1-7v6m1-6v7m1-8v9m1-8v6m1-6v7m1-7v7m1-7v8m1-8v7m1-7v6m1-7v8m1-7v7m1-7v6m1-6v7m1-7v6m1-6v7m1-7v6m1-6v6m1-6v6m1-6v7m1-8v7m1-6v6m1-6v8m1-9v7m1-6v7m1-7v6m1-6v7m1-7v6m1-6v6m1-6v6m1-6v6m1-7v7m1-6v6m1-6v6m1-6v6m1-7v7m1-7v8m1-8v7m1-6v7m1-7v6m1-6v7m1-7v6m1-6v7m1-7v6m1-6v7m1-7v6m1-7v7m1-6v7m1-7v8m1-8v6m1-6v6m1-6v6m1-6v6m1-7v8m1-7v7m1-7v7m1-7v7m1-7v6m1-7v7m1-6v6m1-6v6m1-6v7m1-8v8m1-7v7m1-7v7m1-7v7m1-7v6m1-6v7m1-7v6m1-7v7m1-6v6m1-6v7m1-7v6m1-6v6m1-6v6m1-7v8m1-7v6m1-6v6m1-7v8m1-7v7m1-7v7m1-7v7m1-8v7m1-6v6m1-6v6m1-6v7m1-7v7m1-7v7m1-7v7m1-8v8m1-7v6m1-6v7m1-7v6m1-6v6m1-6v7m1-7v6m1-7v7m1-6v7m1-7v6m1-6v7m1-7v6m1-6v6m1-7v8m1-7v6m1-6v7m1-7v7m1-7v6m1-6v8m1-8v6m1-6v7m1-8v8m1-7v6m1-6v6m1-6v7m1-7v7m1-7v8m1-9v7m1-6v6m1-6v6m1-6v7m1-7v7m1-7v7m1-8v8m1-8v8m1-7v7m1-7v7m1-7v7m1-8v7m1-6v6m1-6v7m1-7v7m1-8v8m1-7v7m1-7v7m1-7v6m1-6v7m1-7v7m1-7v7m1-8v7m1-6v6m1-6v7m1-7v6m1-6v6m1-6v7m1-8v7m1-6v7m1-7v6m1-7v9m1-8v6m1-6v8m1-8v6m1-6v7m1-8v7m1-6v7m1-7v6m1-6v7m1-7v6m1-8v9m1-7v6m1-6v7m1-7v7m1-8v8m1-7v6m1-7v8m1-8v8m1-7v7m1-7v6m1-6v6m1-6v7m1-7v6m1-6v8m1-8v7m1-8v8m1-7v7m1-7v7m1-8v8m1-7v6m1-6v7m1-7v7m1-7v6m1-6v7m1-8v7m1-6v6m1-7v8m1-7v6m1-6v6m1-6v8m1-9v8m1-8v7m1-6v7m1-7v7m1-7v7m1-7v7m1-7v6m1-7v8m1-7v6m1-6v7m1-7v7m1-7v6m1-7v8m1-7v6m1-6v6m1-7v8m1-7v7m1-7v6m1-7v8m1-8v7m1-6v6m1-6v7m1-7v6m1-6v6m1-6v7m1-8v8m1-7v7m1-7v7m1-7v8m1-8v6m1-6v7m1-8v8m1-7v7m1-7v7m1-8v7m1-7v8m1-8v7m1-6v8m1-9v7m1-7v7m1-6v7m1-7v6m1-6v7m1-7v7m1-7v7m1-8v8m1-7v7m1-7v6m1-6v6m1-7v9m1-9v8m1-7v6m1-7v7m1-6v7m1-7v6m1-6v7m1-7v6m1-6v6m1-7v7m1-7v8m1-7v6m1-6v7m1-8v8m1-7v8m1-8v6m1-6v7m1-7v6m1-6v7m1-7v6m1-7v8m1-7v7m1-8v7m1-6v7m1-7v7m1-7v6m1-6v6m1-6v6m1-6v7m1-7v7m1-7v7m1-8v8m1-7v7m1-7v7m1-7v6m1-6v6m1-6v7m1-7v7m1-7v7m1-7v7m1-7v6m1-6v8m1-8v6m1-7v8m1-7v6m1-6v6m1-6v7m1-7v7m1-7v6m1-6v6m1-6v7m1-7v6m1-6v7m1-8v8m1-8v7m1-6v7m1-7v6m1-7v7m1-7v8m1-8v8m1-7v6m1-7v7m1-7v8m1-8v8m1-7v7m1-8v8m1-7v6m1-6v7m1-8v8m1-7v7m1-7v7m1-7v6m1-7v8m1-7v6m1-6v7m1-7v7m1-7v8m1-8v6m1-6v6m1-6v6m1-7v8m1-7v7m1-7v6m1-6v7m1-8v7m1-6v6m1-6v6m1-7v8m1-8v7m1-6v6m1-6v7m1-7v7m1-7v7m1-7v6m1-7v8m1-7v6m1-7v7m1-6v7m1-7v6m1-7v8m1-7v7m1-7v7m1-7v6m1-6v7m1-7v6m1-6v6m1-6v7m1-7v6m1-6v7m1-7v7m1-7v6m1-6v7m1-7v8m1-9v8m1-7v7m1-8v8m1-8v8m1-7v7m1-8v8m1-8v8m1-7v6m1-6v7m1-7v7m1-7v6m1-6v7m1-8v8m1-7v7m1-8v7m1-6v6m1-6v6m1-6v7m1-7v6m1-7v8m1-7v6m1-6v7m1-7v6m1-6v7m1-7v6m1-6v7m1-7v6m1-7v7m1-6v7m1-7v6m1-6v7m1-8v8m1-7v6m1-6v6m1-7v8m1-7v7m1-7v7"/>
</g>
<g shape-rendering="crispEdges">
<rect x="71" y="51" width="599" height="4" fill="#00c8cc"/>
<rect x="677" y="51" width="592" height="4" fill="#00c8cc"/>
<rect x="71" y="52" width="599" height="2" fill="#00ffff"/>
<rect x="677" y="52" width="592" height="2" fill="#00ffff"/>
<rect x="670" y="6" width="7" height="52" fill="#000"/>
<rect x="670" y="6" width="1" height="45" fill="#00c4c8"/>
<rect x="676" y="6" width="1" height="46" fill="#00c4c8"/>
<rect x="670" y="5" width="7" height="6" fill="#00b4b8"/>
<rect x="670" y="6" width="7" height="3" fill="#20f0f4"/>
</g>
<g transform="translate(.5 0)" fill="none" stroke-width="1" shape-rendering="crispEdges">
<path stroke="#c4c402" d="M71 272v14m1-34v41m1-32v13m1-22v42m1-43v42m1-22v14m1-34v43m1-34v14m1-21v42m1-43v40m1-19v13m1-34v40m1-33v13m1-20v42m1-43v43m1-22v14m1-35v42m1-32v13m1-21v42m1-44v43m1-22v13m1-33v41m1-33v13m1-20v41m1-42v41m1-20v13m1-35v43m1-35v14m1-20v42m1-44v42m1-20v14m1-35v41m1-33v13m1-20v41m1-42v41m1-20v13m1-35v42m1-35v13m1-18v42m1-44v42m1-20v13m1-34v41m1-33v13m1-20v41m1-42v41m1-19v13m1-36v42m1-32v13m1-22v43m1-44v42m1-19v14m1-36v41m1-37v14m1-17v41m1-42v41m1-18v13m1-36v40m1-35v13m1-18v43m1-44v42m1-17v13m1-38v43m1-36v13m1-18v41m1-42v41m1-20v13m1-34v41m1-34v13m1-19v42m1-44v42m1-17v13m1-38v42m1-37v13m1-15v40m1-42v40m1-17v13m1-36v40m1-36v13m1-17v43m1-44v42m1-16v13m1-39v42m1-35v13m1-17v40m1-42v41m1-15v13m1-39v41m1-36v13m1-17v42m1-44v42m1-17v14m1-39v43m1-39v13m1-15v42m1-43v42m1-19v13m1-36v42m1-38v13m1-16v41m1-43v42m1-14v14m1-42v42m1-39v14m1-16v43m1-43v40m1-13v13m1-40v41m1-39v13m1-14v41m1-42v42m1-15v14m1-42v42m1-40v14m1-14v42m1-44v42m1-16v13m1-38v41m1-38v13m1-14v40m1-42v41m1-14v13m1-41v42m1-40v14m1-15v43m1-44v42m1-15v13m1-39v41m1-40v41m1-40v13m1-15v41m1-15v13m1-40v42m1-40v42m1-40v13m1-17v42m1-15v14m1-40v41m1-41v42m1-38v13m1-17v41m1-15v13m1-39v41m1-41v43m1-42v14m1-16v43m1-17v13m1-39v42m1-41v42m1-36v13m1-19v41m1-16v13m1-38v42m1-41v42m1-40v13m1-17v43m1-17v13m1-39v42m1-41v42m1-40v13m1-15v40m1-16v13m1-37v41m1-40v41m1-38v13m1-18v42m1-16v14m1-40v43m1-41v42m1-40v13m1-16v42m1-17v13m1-38v41m1-40v41m1-39v13m1-17v42m1-15v13m1-40v43m1-42v43m1-38v13m1-18v41m1-17v13m1-37v42m1-42v42m1-38v13m1-18v43m1-18v14m1-39v43m1-42v43m1-37v13m1-20v42m1-18v13m1-37v42m1-41v43m1-38v14m1-20v42m1-15v13m1-41v45m1-43v44m1-40v14m1-20v45m1-20v13m1-38v44m1-42v44m1-40v14m1-20v44m1-21v14m1-38v46m1-44v46m1-39v15m1-24v47m1-23v15m1-39v46m1-45v47m1-39v15m1-24v47m775-22v15m1-40v48m1-41v15m1-20v46m1-48v47m1-22v15m1-40v45m1-38v14m1-19v45m1-46v44m1-19v15m1-40v44m1-37v14m1-20v45m1-46v44m1-19v14m1-38v43m1-39v14m1-17v43m1-44v43m1-19v13m1-37v43m1-40v13m1-14v42m1-44v43m1-18v13m1-38v43m1-38v13m1-16v42m1-44v42m1-17v14m1-39v42m1-38v14m1-16v42m1-44v42m1-17v14m1-39v42m1-37v14m1-17v42m1-43v42m1-17v13m1-38v41m1-37v13m1-16v42m1-44v42m1-16v13m1-39v42m1-39v13m1-14v41m1-42v41m1-15v13m1-39v41m1-39v13m1-14v42m1-44v43m1-16v13m1-40v43m1-39v13m1-16v43m1-43v42m1-15v13m1-40v40m1-37v13m1-16v42m1-43v41m1-13v13m1-41v42m1-41v43m1-40v13m1-16v41m1-15v13m1-39v42m1-41v41m1-39v13m1-16v41m1-16v14m1-40v43m1-42v43m1-42v14m1-16v42m1-15v13m1-39v40m1-39v41m1-39v13m1-16v41m1-16v13m1-39v42m1-40v42m1-42v14m1-16v43m1-18v13m1-37v41m1-40v41m1-39v13m1-16v41m1-15v13m1-40v42m1-41v43m1-40v13m1-17v42m1-14v13m1-40v41m1-40v41m1-38v13m1-17v41m1-17v13m1-37v41m1-40v42m1-38v13m1-19v42m1-19v13m1-36v43m1-41v41m1-40v13m1-15v41m1-17v13m1-37v41m1-41v43m1-37v13m1-20v43m1-18v14m1-39v43m1-42v42m1-35v13m1-20v42m1-17v13m1-38v40m1-39v41m1-37v14m1-20v42m1-18v13m1-37v42m1-40v42m1-38v14m1-19v41m1-18v13m1-36v41m1-40v41m1-36v13m1-20v43m1-19v13m1-37v42m1-40v42m1-36v13m1-20v41m1-18v13m1-36v41m1-39v40m1-36v13m1-20v42m1-19v14m1-37v43m1-41v42m1-36v13m1-20v41m1-19v13m1-35v41m1-39v40m1-34v13m1-21v41m1-20v13m1-35v42m1-40v42m1-36v14m1-22v42m1-21v14m1-34v41m1-40v41m1-34v13m1-21v42m1-21v13m1-35v43m1-41v42m1-35v14m1-23v43m1-21v13m1-34v40m1-39v41m1-34v13m1-21v41m1-20v13m1-35v43m1-42v43m1-35v14m1-23v43m1-23v14m1-33v41m1-40v41m1-33v13m1-22v41m1-22v14m1-34v42m1-41v43m1-35v13m1-22v42m1-21v13m1-34v43m1-41v41m1-32v13m1-23v41m1-22v13m1-32v42m1-42v43m1-33v13m1-24v42m1-23v13m1-32v43m1-41v41m1-32v13"/>
<path stroke="#c0c002" d="M286 273v15m1-40v48m1-47v49m1-39v15m1-26v48m1-23v16m1-41v49m1-48v49m1-40v15m1-25v49m1-27v15m1-38v51m1-49v50m1-38v17m1-32v51m1-28v16m1-39v51m1-48v51m1-41v16m1-29v52m1-29v16m1-39v52m1-50v52m1-39v17m1-33v55m1-35v17m1-37v55m1-54v55m1-37v17m1-36v53m1-30v17m1-41v55m1-52v55m1-38v18m1-39v58m1-41v18m1-33v58m1-60v59m1-35v18m1-42v58m1-42v19m704-12v18m1-42v59m1-41v18m1-33v58m1-59v56m1-36v18m1-38v56m1-38v17m1-33v56m1-58v55m1-29v17m1-43v55m1-42v17m1-27v54m1-56v54m1-27v16m1-42v52m1-40v16m1-25v51m1-54v51m1-25v16m1-41v51m1-41v16m1-25v51m1-52v50m1-22v16m1-43v48m1-39v15m1-21v47m1-49v47"/>
<path stroke="#bbbb02" d="M327 244v59m1-61v60m1-36v19m1-43v61m1-45v19m1-34v62m1-64v62m1-35v19m1-46v62m1-49v19m1-30v62m1-64v62m1-27v20m1-56v63m1-53v20m1-29v66m1-68v65m1-26v20m1-59v65m1-50v20m1-32v65m1-68v66m1-26v20m1-61v67m1-59v21m1-27v68m1-71v70m1-23v21m1-68v70m1-68v70m1-66v21m1-27v68m1-27v22m1-63v71m643-71v69m1-66v69m1-60v21m1-33v70m1-37v21m1-54v70m1-66v67m1-53v21m1-38v69m1-38v21m1-51v66m1-64v66m1-48v20m1-39v64m1-38v20m1-46v63m1-62v65m1-47v20m1-39v64m1-41v20m1-42v62m1-59v61m1-44v19m1-38v61m1-38v18m1-40v61m1-62v61"/>
<path stroke="#b6b602" d="M361 238v72m1-71v23m1-26v73m1-30v22m1-66v74m1-71v73m1-67v23m1-32v73m1-37v22m1-58v75m1-72v74m1-59v23m1-42v75m1-39v24m1-61v78m1-76v78m1-63v24m1-40v77m1-49v24m1-53v78m1-77v79m1-51v24m1-54v79m1-52v25m1-49v80m1-84v82m1-46v24m1-59v81m1-62v25m1-41v80m1-84v82m589-79v81m1-84v83m1-43v25m1-64v80m1-66v24m1-34v78m1-82v80m1-35v24m1-68v77m1-69v24m1-28v76m1-79v74m1-23v23m1-73v75m1-72v73m1-72v23m1-27v75m1-30v23m1-68v73m1-70v73m1-66v23m1-32v73m1-34v22"/>
<path stroke="#b2b202" d="M392 267v25m1-62v83m1-70v26m1-37v85m1-88v85m1-41v26m1-70v85m1-79v26m1-30v86m1-88v87m1-33v27m1-82v89m1-88v90m1-87v28m1-33v90m1-34v28m1-84v89m1-85v88m1-76v28m1-45v89m1-42v28m1-75v92m1-89v92m1-74v29m1-52v96m1-51v29m1-74v95m1-90v93m1-68v29m1-59v96m1-69v29m1-54v97m1-100v97m1-60v30m528-67v98m1-35v29m1-92v97m1-94v97m1-81v30m1-48v96m1-43v29m1-81v93m1-90v93m1-76v28m1-47v91m1-57v28m1-62v90m1-87v91m1-65v28m1-56v88m1-61v27m1-53v88m1-85v87m1-49v26m1-66v86m1-57v26m1-51v84m1-88v86m1-53v26m1-58v84m1-71v25"/>
<path stroke="#aeae01" d="M426 222v100m1-77v30m1-49v99m1-103v100m1-47v31m1-84v98m1-71v30m1-56v102m1-104v100m1-41v31m1-91v104m1-98v32m1-36v105m1-108v104m1-50v32m1-85v103m1-99v102m1-101v32m1-38v105m1-51v33m1-88v105m1-101v106m1-83v33m1-61v106m1-76v33m1-62v106m1-104v108m1-72v33m1-72v108m1-78v33m1-61v111m1-114v109m1-61v34m1-83v112m1-95v34m1-46v110m1-114v109m1-42v34m1-101v112m1-100v34m1-43v112m465-62v34m1-88v111m1-108v113m1-84v34m1-66v110m1-68v34m1-75v110m1-104v107m1-80v33m1-63v104m1-58v32m1-73v103m1-108v104m1-50v32m1-86v103m1-77v32m1-54v103m1-105v102m1-37v31m1-95v98m1-90v30m1-35v98"/>
<path stroke="#abab01" d="M467 214v116m1-43v35m1-109v117m1-111v114m1-114v36m1-41v114m1-40v35m1-109v113m1-111v117m1-98v35m1-58v118m1-95v36m1-54v118m1-124v121m1-75v37m1-83v119m1-100v37m1-53v121m1-124v120m1-40v37m1-118v120m1-101v38m1-56v126m1-129v125m1-40v38m1-123v126m1-123v127m1-113v38m1-54v123m1-60v38m1-102v125m1-122v128m1-86v39m1-86v128m1-70v40m1-96v132m1-134v131m1-79v39m1-91v129m1-99v40m1-65v129m1-135v131m1-42v40m393-130v132m1-53v41m1-120v136m1-132v133m1-107v39m1-67v128m1-63v39m1-103v129m1-124v127m1-94v39m1-77v125m1-95v39m1-63v126m1-131v127m1-81v38m1-83v122m1-88v37m1-65v120m1-124v119m1-43v36m1-112v122m1-110v36m1-42v118m1-123v120m1-40v36m1-115v118m1-114v115m1-105v35m1-47v111"/>
<path stroke="#a8a800" d="M510 204v135m1-124v41m1-49v136m1-140v134m1-59v42m1-117v134m1-128v134m1-104v41m1-77v138m1-71v42m1-111v142m1-137v140m1-107v43m1-82v141m1-73v44m1-107v141m1-146v142m1-62v43m1-123v143m1-114v43m1-67v143m1-150v144m1-46v45m1-144v147m1-143v148m1-128v45m1-69v146m1-85v45m1-106v145m1-139v147m1-114v46m1-87v152m1-90v47m1-110v155m1-153v157m1-112v47m1-94v151m1-102v47m1-89v151m1-158v153m1-69v47m1-133v156m1-144v48m1-54v157m1-164v160m1-52v48m1-156v160m1-154v158m1-155v48m1-56v159m1-61v48m1-147v156m1-150v159m1-118v49m1-97v161m1-99v49m1-108v163m1-166v160m1-79v48m1-128v157m1-113v48m1-86v158m1-164v161m1-60v49m1-151v159m1-150v49m1-54v162m1-166v159m1-50v48m1-156v159m1-152v157m1-148v48m1-64v161m1-93v49m1-118v161m1-156v161m1-129v49m1-86v162m1-95v49m1-112v161m1-164v158m1-73v48m1-133v156m1-110v48m1-87v158m1-166v159m1-53v49m1-155v163m1-141v49m1-64v158m1-164v158m1-67v48m1-139v156m1-150v158m1-134v48m1-79v158m1-97v49m1-110v160m1-158v164m1-126v49m1-88v157m1-101v48m1-101v161m1-164v161m1-67v48m1-143v158m1-130v49m1-72v161m1-166v163m1-54v49m1-158v158m1-149v156m1-155v48m1-57v158m1-64v48m1-142v158m1-155v162m1-124v49m1-91v163m1-84v49m1-128v163m1-156v158m1-99v48m1-113v156m1-114v48m1-86v160m1-165v162m1-86v49m1-125v162m1-134v50m1-75v163m1-166v158m1-49v48m1-156v158m1-151v157m1-140v48m1-72v161m1-82v48m1-128v162m1-159v163m1-129v50m1-87v161m1-102v49m1-102v159m1-164v158m1-110v48m1-96v159m1-131v49m1-73v161m1-166v161m1-69v49m1-141v161m1-146v48m1-58v160m1-164v161m1-54v48m1-155v156m1-153v161m1-132v48m1-81v161m1-87v50m1-124v159m1-155v162m1-103v48m1-110v161m1-108v48m1-95v158m1-164v159m1-85v49m1-124v161m1-135v49m1-69v160m1-166v158m1-49v49m1-157v161m1-152v48m1-49v156m1-164v157m1-49v48m1-156v162m1-159v162m1-138v50m1-78v161m1-110v49m1-100v162m1-155v158m1-110v48m1-102v160m1-101v48m1-103v160m1-165v159m1-93v49m1-115v160m1-132v49m1-69v158m1-165v158m1-50v48m1-156v160m1-155v159m1-148v48m1-64v160m1-58v49m1-152v162m1-159v163m1-121v49m1-94v160m1-73v48m1-134v156m1-149v157m1-103v48m1-109v160m1-119v48m1-85v161m1-166v160m1-63v49m1-146v163m1-127v48m1-75v156m1-164v157m1-77v48m1-128v160m1-157v161m1-148v48m1-65v163m1-80v49m1-132v160m1-154v160m1-139v49m1-75v159m1-102v48m1-97v156m1-164v158m1-66v48m1-141v161m1-121v49m1-86v163m1-166v160m1-51v48m1-156v159m1-149v48m1-51v157m1-164v161m1-53v48m1-157v163m1-156v159m1-143v49m1-72v161m1-58v49m1-151v162m1-158v160m1-121v48m1-91v158m1-96v49m1-106v159m1-165v163m1-107v49m1-105v160m1-102v49m1-103v162m1-165v157m1-51v48m1-154v156m1-148v156m1-156v48m1-57v159m1-50v49m1-158v159m1-156v163m1-114v49m1-101v161m1-104v49m1-105v156m1-148v156m1-118v48m1-94v157m1-112v49m1-92v163m1-166v160m1-86v49m1-123v159m1-142v48m1-56v156m1-164v161m1-63v48m1-146v160m1-157v161m1-136v49m1-78v161m1-71v50m1-140v164m1-161v163m1-157v48m1-56v156m1-89v48m1-115v159m1-155v160m1-94v49m1-120v159m1-116v50m1-87v160m1-166v160m1-65v49m1-143v159m1-144v48m1-58v159m1-164v158m1-65v48m1-142v163m1-160v163m1-139v49m1-76v162m1-84v49m1-126v156m1-148v156m1-131v48m1-81v159m1-106v49m1-99v162m1-166v162m1-95v49m1-116v160m1-128v49m1-77v162m1-165v156m1-60v48m1-144v157m1-134v49m1-69v161m1-165v160m1-78v49m1-131v160m1-153v159m1-123v49m1-91v160m1-87v48m1-121v157m1-152v158m1-137v48m1-74v161m1-108v49m1-99v161m1-164v157m1-72v48m1-132v155m1-128v47m1-65v151m1-158v151m1-47v46m1-150v155m1-152v155m1-149v47m1-57v152m1-52v47m1-146v153m1-145v149m1-114v45m1-86v147m1-83v45m1-108v147m1-145v151m1-99v45m1-100v150m1-119v45m1-68v145m1-152v149m1-75v45m1-117v142m1-105v43m1-77v145m1-148v145m1-48v44m1-141v144m1-137v141m1-136v43m1-54v141m1-64v43m1-119v139m1-131v135m1-106v42m1-78v135m1-107v42m1-70v137m1-132v138m1-85v42m1-100v138m1-101v42m1-73v135m1-139v134m1-71v41m1-103v132m1-106v41m1-64v134"/>
<path stroke="#bcbc00" d="M72 253v2m3-3v2m2-2v2m3-1v2m2-2v2m3-3v2m2-2v2m3-2v2m2-1v2m3-2v2m2-3v2m3-2v2m2-1v2m3-2v2m2-3v2m3-2v2m2-1v2m3-2v2m2-3v2m3-2v2m2-1v2m3-2v2m2-2v2m3-3v2m2-2v2m3-1v2m2-2v2m3-3v2m2-2v2m3-1v2m2-2v2m3-3v2m2-2v2m3-1v2m2-2v2m3-3v2m2-2v2m3-1v2m2-2v2m3-3v2m2-2v2m3-1v2m2-2v2m3-2v2m2-3v2m3-2v2m2-1v2m3-2v2m2-3v2m3-2v2m2-1v2m3-2v2m2-3v2m3-2v2m2-1v2m3-2v2m2-2v2m3-3v2m2-2v2m3-1v2m2-2v2m3-3v2m2-2v2m3-1v2m2-2v2m3-3v2m2-2v2m3-1v2m2-2v2m3-3v2m2-2v2m3-1v2m2-2v2m3-3v2m2-2v2m3-2v2m2-2v2m3-2v2m2-3v2m3-2v2m2-2v2m3-2v2m2-3v2m3-2v2m2-2v2m3-2v2m2-3v2m3-2v2m2-2v2m3-2v2m2-3v2m3-3v2m2-2v2m3-2v2m2-2v2m3-3v2m2-2v2m3-2v2m2-3v2m3-3v2m3-2v2m2-2v2m3-3v2m2-2v2m3-3v2m2-2v2m3-2v2m2-3v2m3-3v2m2-2v2m3-2v2m2-3v2m3-3v2m2-2v2m3-2v2m2-2v3m3-4v3m2-4v3m3-3v3m2-3v3m3-4v3m2-4v3m3-2v3m2-4v3m3-4v3m3-4v3m2-2v3m3-4v3m2-4v3m3-4v3m2-3v3m3-3v3m2-4v3m3-4v3m2-3v3m3-4v3m2-3v3m3-5v3m2-3v3m3-3v3m3-4v3m2-4v4m3-4v4m2-4v4m3-5v4m2-5v4m3-5v4m2-3v4m3-5v4m2-5v4m3-5v4m2-3v4m3-5v4m3-5v4m2-5v4m3-3v4m2-4v4m3-6v4m2-5v4m3-3v4m2-4v4m3-6v4m3-5v4m2-4v4m3-4v4m2-5v4m3-6v4m2-4v4m3-3v5m2-6v5m3-7v5m3-5v5m2-5v5m3-6v5m2-6v5m3-6v5m2-5v5m3-5v5m2-7v5m3-6v5m3-5v5m2-5v5m3-7v5m2-6v5m3-5v5m2-5v5m3-7v5m2-6v5m3-5v6m3-6v6m2-8v6m3-7v6m2-6v6m3-5v6m2-7v6m3-7v6m3-6v6m2-5v6m3-6v6m2-7v6m3-6v6m2-5v6m3-6v6m2-7v6m3-6v6m3-5v6m2-6v6m3-7v6m2-6v6m3-5v6m2-6v6m3-7v6m2-6v6m3-5v6m3-6v6m2-7v6m3-6v6m2-6v6m3-5v6m2-6v6m3-7v6m2-6v6m3-5v6m3-7v6m2-6v6m3-6v6m2-5v6m3-6v6m2-7v6m3-6v6m3-5v6m2-6v6m3-7v6m2-6v6m3-5v6m2-6v6m3-7v6m2-6v6m3-5v6m3-6v6m2-7v6m3-6v6m2-5v6m3-6v6m2-6v6m3-7v6m2-6v6m3-5v6m3-7v6m2-6v6m3-5v6m2-6v6m3-6v6m2-7v6m3-6v6m2-5v6m3-6v6m3-7v6m2-6v6m3-5v6m2-6v6m3-7v6m2-6v6m3-5v6m3-6v6m2-7v6m3-6v6m2-5v6m3-6v6m2-7v6m3-6v6m2-5v6m3-6v6m3-7v6m2-6v6m3-5v6m2-6v6m3-7v6m2-6v6m3-6v6m2-5v6m3-6v6m3-7v6m2-6v6m3-5v6m2-6v6m3-7v6m2-6v6m3-5v6m2-6v6m3-7v6m3-6v6m2-5v6m3-6v6m2-7v6m3-6v6m2-5v6m3-6v6m3-7v6m2-6v6m3-5v6m2-6v6m3-7v6m2-6v6m3-5v6m2-6v6m3-6v6m3-6v6m2-5v6m3-4v6m2-6v6m3-7v5m2-4v5m3-3v5m2-4v5m3-6v5m3-4v5m2-3v5m3-5v5m2-5v5m3-4v5m2-4v5m3-4v5m2-5v5m3-5v5m3-3v5m2-4v5m3-6v5m2-5v5m3-3v5m2-4v5m3-5v5m3-4v4m2-3v4m3-2v4m2-4v4m3-3v4m2-3v4m3-2v4m2-4v4m3-4v4m2-3v4m3-1v4m3-4v4m2-4v4m3-2v4m2-3v4m3-3v3m2-3v3m3-2v3m2-2v3m3-2v3m2-3v3m3-2v3m2-2v3m3-2v3m3-3v3m2-2v3m3-2v3m2-2v3m3-3v3m2-2v3m3-2v3m2-2v3m3-3v3m2-3v3m3-2v3m2-2v3m3-3v2m2-2v2m3-1v2m2-1v2m3-1v2m2-2v2m3-2v2m2-1v2m3-1v2m3-2v2m2-2v2m3 0v2m2-2v2m3-2v2m2-2v2m3-1v2m2-1v2m3-2v2m2-1v2m3-2v2m2-1v2m3-1v2m2-2v2m3-2v2m2-2v2m3-1v2m2-2v2m3-2v2m2-1v2m3-2v2m2-2v2m3-2v2m2-2v2m3-2v2m2-2v2m3-2v2m2-2v2m3-1v2m2-2v2m3-3v2m2-2v2m3-1v2m2-2v2m3-3v2m2-2v2m3-1v2m2-2v2m3-3v2m2-2v2m3-1v2m2-2v2m3-2v2m2-3v2m3-2v2m2-1v2m3-2v2m2-3v2m3-2v2m2-1v2m3-2v2m2-3v2m3-2v2m2-1v2m3-2v2m2-2v2m3-3v2m2-2v2m3-1v2m2-2v2m3-3v2m2-2v2m3-1v2m2-2v2m3-3v2m2-2v2m3-1v2m2-2v2m3-3v2m2-2v2m3-1v2m2-2v2m3-3v2m2-2v2m3-1v2m2-2v2m3-2v2m2-3v2m3-2v2m2-1v2m3-2v2m2-3v2m3-2v2m2-1v2m3-2v2m2-3v2m3-2v2m2-1v2m3-2v2m2-3v2m3-2v2m2-2v2m3-1v2m2-2v2m3-3v2m2-2v2"/>
<path stroke="#bcbc00" d="M74 291v2m5-1v2m5-3v2m5-1v2m5-3v2m5-1v2m5-3v2m5-1v2m5-3v2m5-1v2m5-3v2m5-1v2m5-3v2m5-1v2m5-3v2m5-1v2m5-3v2m5-1v2m5-2v2m5-3v2m5-1v2m5-3v2m5-1v2m5-3v2m5-1v2m4-3v2m5-1v2m5-3v2m5-1v2m5-3v2m5-1v2m5-3v2m5-2v2m5-1v2m5-3v2m5-1v2m5-3v2m5-1v2m5-2v2m5-1v2m5-2v2m5-1v2m5-2v2m5-1v2m5-2v2m5-1v2m5-1v2m5-2v2m5-1v2m5-1v2m4-1v2m5-2v2m5 0v2m5-2v2m5 0v2m5-2v2m5-1v2m4-1v2m5-2v3m5-2v3m5-2v3m5-2v3m5-3v3m4-1v3m5-3v3m5-1v3m5-3v3m4-1v3m5-3v3m5-1v3m5-2v3m4-2v3m5-2v4m5-4v4m5-2v4m4-5v4m5-2v4m5-4v4m4-2v4m5-4v4m5-3v4m4-2v4m5-4v4m4-2v4m5-4v4m5-2v4m4-3v4m5-4v5m4-4v5m5-5v5m5-2v5m4-5v5m5-2v5m4-5v5m5-3v5m4-4v5m5-4v5m5-2v5m4-7v6m5-3v6m4-6v6m5-5v6m4-6v6m5-7v6m5-5v6m4-7v6m5-5v6m4-7v6m5-5v6m5-7v6m4-6v6m5-5v6m4-7v6m5-5v6m4-7v6m5-5v6m5-7v6m4-6v6m5-5v6m4-7v6m5-5v6m4-7v6m5-5v6m5-7v6m4-6v6m5-5v6m4-7v6m5-5v6m5-7v6m4-5v6m5-7v6m4-6v6m5-5v6m4-7v6m5-5v6m5-7v6m4-5v6m5-7v6m4-6v6m5-5v6m4-7v6m5-5v6m5-7v6m4-5v6m5-7v6m4-6v6m5-5v6m4-7v6m5-5v6m5-7v6m4-5v6m5-7v6m4-6v6m5-5v6m5-7v6m4-5v6m5-7v6m4-5v6m5-7v6m4-5v6m5-6v6m5-7v6m4-5v6m5-8v6m4-5v6m5-9v6m4-6v6m5-6v5m5-6v5m4-6v5m5-7v5m4-5v5m5-8v5m5-4v5m4-7v5m5-6v5m4-6v5m5-7v5m4-5v5m5-8v4m5-4v4m4-7v4m5-5v4m5-6v4m4-6v4m5-5v4m5-7v4m4-3v3m5-5v3m5-4v3m5-5v3m4-4v3m5-5v3m5-4v3m5-4v3m4-5v3m5-3v3m5-5v3m5-3v2m5-3v2m5-3v2m5-3v2m4-3v2m5-3v2m5-3v2m5-3v2m5-3v2m5-3v2m5-3v2m5-3v2m5-3v2m5-2v2m5-3v2m5-2v2m5-2v2m5-2v2m5-2v2m5-2v2m5-3v2m5-1v2m5-2v2m5-3v2m4-1v2m5-3v2m5-1v2m5-3v2m5-1v2m5-3v2m5-1v2m5-3v2m5-1v2m5-3v2m5-1v2m5-3v2m5-2v2m5-1v2m5-3v2m5-1v2m5-3v2m5-1v2m5-3v2m5-1v2m5-3v2m5-1v2m5-3v2m5-1v2m5-3v2m5-1v2m5-3v2m5-1v2m5-3v2"/>
<path stroke="#dcdc00" d="M72 254v1m3-2v1m2-1v1m3 0v1m2-1v1m3-2v1m2-1v1m3-1v1m2 0v1m3-1v1m2-2v1m3-1v1m2 0v1m3-1v1m2-2v1m3-1v1m2 0v1m3-1v1m2-2v1m3-1v1m2 0v1m3-1v1m2-1v1m3-2v1m2-1v1m3 0v1m2-1v1m3-2v1m2-1v1m3 0v1m2-1v1m3-2v1m2-1v1m3 0v1m2-1v1m3-2v1m2-1v1m3 0v1m2-1v1m3-2v1m2-1v1m3 0v1m2-1v1m3-1v1m2-2v1m3-1v1m2 0v1m3-1v1m2-2v1m3-1v1m2 0v1m3-1v1m2-2v1m3-1v1m2 0v1m3-1v1m2-1v1m3-2v1m2-1v1m3 0v1m2-1v1m3-2v1m2-1v1m3 0v1m2-1v1m3-2v1m2-1v1m3 0v1m2-1v1m3-2v1m2-1v1m3 0v1m2-1v1m3-2v1m2-1v1m3-1v1m2-1v1m3-1v1m2-2v1m3-1v1m2-1v1m3-1v1m2-2v1m3-1v1m2-1v1m3-1v1m2-2v1m3-1v1m2-1v1m3-1v1m2-2v1m3-2v1m2-1v1m3-1v1m2-1v1m3-2v1m2-1v1m3-1v1m2-2v1m3-2v1m3-1v1m2-1v1m3-2v1m2-1v1m3-2v1m2-1v1m3-1v1m2-2v1m3-2v1m2-1v1m3-1v1m2-2v1m3-2v1m2-1v1m3-1v1m2-1v1m3-2v1m2-2v1m3-1v1m2-1v1m3-2v1m2-2v1m3 0v1m2-2v1m3-2v1m3-2v1m2 0v1m3-2v2m2-3v2m3-3v2m2-2v2m3-2v2m2-3v2m3-3v2m2-2v2m3-3v2m2-2v2m3-4v2m2-2v2m3-2v2m3-3v2m2-2v1m3-1v1m2-1v1m3-2v1m2-2v1m3-2v1m2 0v1m3-2v1m2-2v1m3-2v1m2 0v1m3-2v1m3-2v1m2-2v1m3 0v1m2-1v1m3-3v1m2-2v2m3-1v2m2-2v2m3-4v2m3-3v2m2-2v2m3-2v2m2-3v2m3-4v2m2-2v2m3-1v2m2-3v2m3-4v2m3-2v2m2-2v2m3-3v2m2-3v2m3-3v2m2-2v2m3-2v2m2-4v2m3-3v2m3-2v2m2-2v2m3-4v2m2-3v3m3-3v3m2-3v3m3-5v3m2-4v3m3-3v3m3-3v3m2-5v3m3-4v3m2-3v3m3-2v3m2-4v3m3-4v3m3-3v3m2-2v3m3-3v3m2-4v3m3-3v3m2-2v3m3-3v3m2-4v3m3-3v3m3-2v3m2-3v3m3-4v3m2-3v3m3-2v3m2-3v3m3-4v3m2-3v3m3-2v3m3-3v3m2-4v3m3-3v3m2-3v3m3-2v3m2-3v3m3-4v3m2-3v3m3-2v3m3-4v3m2-3v3m3-3v3m2-2v3m3-3v3m2-4v3m3-3v3m3-2v3m2-3v3m3-4v3m2-3v3m3-2v3m2-3v3m3-4v3m2-3v3m3-2v3m3-3v3m2-4v3m3-3v3m2-2v3m3-3v3m2-3v3m3-4v3m2-3v3m3-2v3m3-4v3m2-3v3m3-2v3m2-3v3m3-3v3m2-4v3m3-3v3m2-2v3m3-3v3m3-4v3m2-3v3m3-2v3m2-3v3m3-4v3m2-3v3m3-2v3m3-3v3m2-4v3m3-3v3m2-2v3m3-3v3m2-4v3m3-3v3m2-2v3m3-3v3m3-4v3m2-3v3m3-2v3m2-3v3m3-4v3m2-3v3m3-3v3m2-2v3m3-3v3m3-4v3m2-3v3m3-2v3m2-3v3m3-4v3m2-3v3m3-2v3m2-3v3m3-4v3m3-3v3m2-2v3m3-3v3m2-4v3m3-3v3m2-2v3m3-3v3m3-4v3m2-3v3m3-2v3m2-3v3m3-4v3m2-3v3m3-2v3m2-3v3m3-3v3m3-3v3m2-2v3m3-1v3m2-3v3m3-4v3m2-2v3m3-1v3m2-2v3m3-4v3m3-2v2m2 0v2m3-2v2m2-2v2m3-1v2m2-1v2m3-1v2m2-2v2m3-2v2m3 0v2m2-1v2m3-3v2m2-2v2m3 0v2m2-1v2m3-2v2m3-1v2m2-1v2m3 0v2m2-2v2m3-1v2m2-1v2m3 0v1m2-1v1m3-1v1m2 0v1m3 2v1m3-1v1m2-1v1m3 1v1m2 0v1m3-1v2m2-2v2m3-1v2m2-1v2m3-1v2m2-2v2m3-1v2m2-1v2m3-1v2m3-2v2m2-1v2m3-1v1m2 0v1m3-1v1m2 0v1m3 0v1m2 0v1m3-1v1m2-1v1m3 0v1m2 0v1m3-1v1m2-1v1m3 0v1m2 0v1m3 0v1m2-1v1m3-1v1m2 0v1m3 0v1m3-1v1m2-1v1m3 1v1m2-1v1m3-1v1m2-1v1m3 0v1m2 0v1m3-1v1m2 0v1m3-1v1m2 0v1m3 0v1m2-1v1m3-1v1m2-1v1m3 0v1m2-1v1m3-1v1m2 0v1m3-1v1m2-1v1m3-1v1m2-1v1m3-1v1m2-1v1m3-1v1m2-1v1m3 0v1m2-1v1m3-2v1m2-1v1m3 0v1m2-1v1m3-2v1m2-1v1m3 0v1m2-1v1m3-2v1m2-1v1m3 0v1m2-1v1m3-1v1m2-2v1m3-1v1m2 0v1m3-1v1m2-2v1m3-1v1m2 0v1m3-1v1m2-2v1m3-1v1m2 0v1m3-1v1m2-1v1m3-2v1m2-1v1m3 0v1m2-1v1m3-2v1m2-1v1m3 0v1m2-1v1m3-2v1m2-1v1m3 0v1m2-1v1m3-2v1m2-1v1m3 0v1m2-1v1m3-2v1m2-1v1m3 0v1m2-1v1m3-1v1m2-2v1m3-1v1m2 0v1m3-1v1m2-2v1m3-1v1m2 0v1m3-1v1m2-2v1m3-1v1m2 0v1m3-1v1m2-2v1m3-1v1m2-1v1m3 0v1m2-1v1m3-2v1m2-1v1"/>
<path stroke="#dcdc00" d="M74 291v1m5 0v1m5-2v1m5 0v1m5-2v1m5 0v1m5-2v1m5 0v1m5-2v1m5 0v1m5-2v1m5 0v1m5-2v1m5 0v1m5-2v1m5 0v1m5-2v1m5 0v1m5-1v1m5-2v1m5 0v1m5-2v1m5 0v1m5-2v1m5 0v1m4-2v1m5 0v1m5-2v1m5 0v1m5-2v1m5 0v1m5-2v1m5-1v1m5 0v1m5-2v1m5 0v1m5-2v1m5 0v1m5-1v1m5 0v1m5-1v1m5 0v1m5-1v1m5 0v1m5-1v1m5 0v1m5 0v1m5-1v1m5 0v1m5 0v1m4 0v1m5-1v1m5 1v1m5-1v1m5 1v1m5-1v1m5 0v1m4 0v1m5 0v1m5 0v1m5 0v1m5 0v1m5-1v1m4 1v1m5-1v1m5 0v2m5-2v2m4 0v2m5-2v2m5 0v2m5-1v2m4-1v2m5 0v1m5-1v1m5 1v1m4-2v1m5 1v1m5-1v1m4 1v1m5-1v1m5 0v1m4 0v2m5-2v2m4 0v2m5-2v2m5 0v2m4-1v2m5-1v2m4-1v2m5-2v2m5 1v2m4-2v2m5 1v2m4-2v2m5 0v2m4-2v3m5-2v3m5 0v3m4-4v3m5 0v3m4-3v3m5-2v3m4-3v3m5-4v3m5-2v3m4-4v3m5-2v3m4-4v3m5-2v3m5-4v3m4-3v3m5-2v3m4-4v3m5-2v3m4-4v3m5-2v3m5-4v3m4-3v3m5-2v3m4-4v3m5-2v3m4-4v3m5-2v3m5-4v3m4-3v3m5-2v3m4-4v3m5-2v3m5-4v3m4-2v3m5-4v3m4-3v3m5-2v3m4-4v3m5-2v3m5-4v3m4-2v3m5-4v3m4-3v3m5-2v3m4-4v3m5-2v3m5-4v3m4-2v3m5-4v3m4-3v3m5-2v3m4-4v3m5-2v3m5-4v3m4-2v3m5-4v3m4-3v3m5-2v3m5-4v3m4-2v3m5-4v3m4-2v3m5-4v3m4-2v3m5-3v3m5-4v3m4-2v3m5-5v3m4-2v3m5-6v3m4-3v3m5-4v3m5-4v3m4-4v3m5-4v2m4-2v2m5-5v2m5-1v2m4-4v2m5-3v2m4-3v2m5-4v2m4-2v2m5-6v2m5-2v2m4-5v2m5-2v1m5-3v1m4-3v1m5-2v1m5-4v1m4-1v2m5-4v2m5-3v2m5-4v2m4-3v2m5-4v2m5-2v1m5-2v1m4-3v1m5-1v1m5-3v1m5-2v1m5-2v1m5-2v1m5-2v1m4-2v1m5-2v1m5-2v1m5-2v1m5-2v1m5-2v1m5-2v1m5-2v1m5-2v1m5-1v1m5-2v1m5-1v1m5-1v1m5-1v1m5-1v1m5-1v1m5-2v1m5 0v1m5-1v1m5-2v1m4 0v1m5-2v1m5 0v1m5-2v1m5 0v1m5-2v1m5 0v1m5-2v1m5 0v1m5-2v1m5 0v1m5-2v1m5-1v1m5 0v1m5-2v1m5 0v1m5-2v1m5 0v1m5-2v1m5 0v1m5-2v1m5 0v1m5-2v1m5 0v1m5-2v1m5 0v1m5-2v1m5 0v1m5-2v1"/>
</g>
<g stroke="#ddd" stroke-width="1" stroke-dasharray="1 1" shape-rendering="crispEdges" fill="none" opacity=".28"><path d="M190.5 5 V543"/><path d="M310.5 5 V543"/><path d="M430.5 5 V543"/><path d="M550.5 5 V543"/><path d="M790.5 5 V543"/><path d="M910.5 5 V543"/><path d="M1030.5 5 V543"/><path d="M1150.5 5 V543"/><path d="M72 71.5 H1269"/><path d="M72 138.5 H1269"/><path d="M72 206.5 H1269"/><path d="M72 274.5 H1269"/><path d="M72 341.5 H1269"/><path d="M72 409.5 H1269"/><path d="M72 476.5 H1269"/></g>
<g transform="translate(.5 0)" fill="none" stroke-width="1" shape-rendering="crispEdges">
<path stroke="#24f624" d="M71 424v11m1-11v11m1-11v11m1-11v10m1-10v10m1-10v10m1-10v10m1-10v11m1-11v11m1-12v12m1-12v13m1-13v12m1-12v12m1-12v12m1-12v14m1-13v11m1-11v11m1-12v12m1-11v11m1-11v11m1-11v11m1-10v10m1-10v10m1-10v10m1-12v14m1-15v13m1-12v12m1-12v12m1-11v13m1-13v11m1-10v10m1-10v10m1-10v11m1-12v11m1-11v11m1-11v10m1-11v11m1-11v11m1-11v12m1-12v12m1-11v11m1-11v10m1-11v12m1-11v10m1-10v10m1-10v10m1-10v10m1-9v9m1-11v11m1-9v9m1-11v11m1-11v11m1-11v11m1-11v11m1-11v12m1-10v10m1-10v10m1-10v11m1-11v10m1-10v10m1-12v12m1-12v12m1-11v11m1-12v11m1-10v11m1-11v11m1-11v12m1-13v12m1-12v12m1-12v12m1-12v11m1-9v10m1-10v10m1-11v11m1-10v10m1-10v11m1-11v9m1-9v9m1-11v11m1-11v14m1-13v10m1-9v9m1-11v11m1-10v10m1-10v10m1-10v10m1-10v10m1-10v10m1-10v10m1-10v11m1-11v11m1-11v12m1-13v12m1-10v12m1-12v10m1-10v9m1-10v10m1-10v10m1-10v10m1-9v10m1-12v12m1-12v12m1-12v12m1-13v13m1-12v12m1-13v13m1-12v12m1-12v12m1-12v12m1-10v9m1-9v10m1-10v10m1-11v12m1-12v11m1-11v10m1-12v12m1-10v10m1-10v10m1-11v12m1-11v13m1-13v11m1-11v11m1-11v12m1-12v10m1-10v10m1-10v10m1-11v11m1-11v11m1-10v10m1-10v10m1-10v10m1-9v10m1-11v11m1-11v11m1-11v11m1-11v11m1-11v11m1-11v11m1-10v10m1-12v12m1-12v12m1-12v12m1-12v11m1-11v11m1-11v11m1-11v11m1-11v12m1-11v11m1-11v11m1-12v12m1-11v10m1-10v10m1-10v13m1-13v12m1-13v12m1-12v13m1-13v12m1-12v12m1-12v12m1-12v13m1-11v11m1-13v13m1-15v15m1-13v13m1-13v13m1-13v13m1-11v11m1-12v12m1-12v10m1-10v10m1-10v10m1-10v11m1-11v11m1-11v11m1-11v10m1-10v10m1-10v10m1-10v10m1-10v12m1-13v13m1-12v10m1-10v10m1-10v10m1-10v12m1-12v11m1-11v11m1-11v11m1-11v10m1-12v13m1-12v12m1-12v12m1-12v14m1-15v14m1-13v13m1-13v13m1-13v13m1-13v13m1-13v13m1-13v13m1-13v12m1-12v12m1-12v12m1-12v13m1-13v13m1-13v13m1-14v13m1-13v13m1-11v11m1-11v11m1-12v13m1-13v11m1-11v11m1-11v11m1-11v12m1-13v13m1-13v12m1-12v12m1-12v12m1-12v12m1-12v13m1-14v14m1-12v11m1-11v11m1-11v13m1-14v14m1-14v12m1-12v12m1-12v12m1-12v13m1-13v14m1-14v14m1-14v14m1-15v15m1-15v15m1-15v15m1-16v15m1-13v12m1-12v12m1-13v13m1-13v15m1-15v15m1-15v13m1-13v13m1-14v14m1-14v16m1-16v16m1-16v16m1-16v16m1-16v16m1-16v16m1-16v16m1-17v15m1-15v17m1-18v17m1-17v17m1-17v17m1-17v17m1-16v16m1-16v16m1-17v18m1-18v20m1-20v18m1-18v18m1-17v15m1-16v16m1-17v18m1-18v19m1-19v17m1-16v17m1-18v22m1-22v19m1-19v19m1-21v19m1-18v19m1-19v19m1-19v20m1-20v20m1-21v21m1-21v19m1-19v19m1-18v20m1-20v20m1-21v21m1-20v20m1-21v21m1-21v21m1-22v20m1-20v20m1-20v22m1-22v22m1-23v22m1-21v21m1-21v23m1-23v22m1-23v24m1-25v22m1-21v21m1-20v20m1-20v20m1-20v21m1-21v23m1-25v24m1-24v24m1-24v24m1-22v23m1-23v21m1-22v22m1-22v22m1-23v24m1-25v28m1-28v25m1-25v25m1-23v21m1-21v21m1-22v22m1-24v26m1-26v26m1-24v26m1-26v24m1-25v23m1-26v26m1-23v23m1-24v24m1-24v25m1-25v25m1-24v24m1-26v27m1-27v30m1-30v27m1-27v27m1-27v27m1-27v25m1-26v26m1-27v27m1-25v25m1-26v27m1-27v27m1-27v27m1-27v28m1-28v28m1-27v27m1-27v26m1-28v28m1-28v28m1-28v28m1-28v28m1-30v30m1-28v28m1-30v33m1-33v29m1-30v30m1-31v31m1-29v29m1-29v29m1-31v35m1-34v32m1-32v32m1-34v33m1-31v31m1-31v30m1-28v28m1-28v31m1-35v35m1-33v33m1-33v31m1-31v31m1-32v32m1-33v33m1-33v33m1-33v33m1-32v32m1-31v37m1-37v30m1-30v30m1-32v35m1-35v32m1-32v35m1-39v37m1-35v35m1-35v34m1-37v38m1-32v32m1-33v35m1-36v33m1-32v35m1-37v34m1-35v35m1-36v37m1-37v37m1-38v38m1-36v36m1-38v38m1-36v36m1-38v38m1-38v37m1-35v39m1-40v36m1-38v38m1-38v41m1-41v40m1-40v38m1-38v38m1-35v35m1-35v35m1-39v39m1-42v45m1-42v42m1-43v46m1-45v42m1-43v43m1-43v43m1-41v41m1-42v43m1-46v45m1-42v39m1-39v39m1-41v42m1-42v42m1-44v44m1-42v44m1-45v43m1-43v43m1-43v43m1-43v43m1-43v43m1-40v40m1-41v41m1-41v41m1-41v44m1-44v44m1-44v44m1-45v45m1-46v44m1-43v43m1-46v46m1-49v49m1-47v47m1-44v44m1-44v46m1-46v46m1-52v52m1-52v52m1-53v53m1-50v49m1-46v46m1-46v46m1-47v48m1-48v48m1-51v51m1-52v51m1-51v51m1-53v53m1-53v53m1-52v56m1-56v50m1-50v51m1-50v50m1-51v51m1-50v51m1-53v53m1-55v56m1-57v59m1-57v53m1-53v53m1-55v55m1-53v57m1-54v56m1-60v55m1-55v55m1-55v54m1-53v53m1-53v53m1-53v57m1-58v57m1-57v57m1-57v56m1-56v54m1-55v58m1-58v58m1-58v58m1-58v57m1-57v57m1-57v57m1-61v64m1-59v56m1-56v56m1-56v56m1-56v60m1-60v56m1-58v64m1-63v57m1-57v57m1-61v61m1-63v64m1-64v64m1-61v61m1-60v60m1-63v63m1-60v60m1-60v60m1-60v60m1-60v60m1-60v60m1-62v62m1-59v62m1-62v59m1-59v59m1-64v64m1-59v57m1-60v60m1-58v62m1-63v59m1-58v59m1-59v59m1-62v62m1-59v59m1-59v64m1-68v62m1-62v65m1-68v68m1-65v63m1-61v61m1-61v60m1-59v59m1-59v63m1-66v62m1-64v64m1-62v62m1-64v64m1-60v63m1-63v63m1-62v59m1-63v63m1-63v66m1-62v62m1-63v63m1-62v59m1-60v60m1-61v64m1-63v63m1-66v65m1-64v64m1-64v65m1-66v66m1-65v65m1-65v64m1-61v61m1-61v61m1-61v62m1-62v62m1-63v63m1-62v66m1-68v63m1-61v61m1-61v62m1-62v61m1-66v66m1-61v61m1-61v61m1-61v61m1-66v66m1-64v64m1-65v66m1-66v65m1-61v62m1-62v62m1-67v67m1-66v66m1-66v65m1-67v67m1-61v61m1-61v61m1-61v63m1-65v63m1-62v62m1-65v65m1-65v67m1-67v67m1-66v63m1-61v61m1-61v63m1-66v64m1-64v64m1-66v66m1-66v67m1-65v65m1-65v65m1-65v65m1-65v65m1-65v67m1-65v65m1-67v67m1-67v67m1-64v61m1-61v68m1-68v61m1-63v63m1-66v69m1-67v67m1-64v64m1-68v67m1-65v65m1-65v63m1-64v64m1-64v64m1-67v67m1-61v63m1-63v64m1-67v66m1-65v65m1-63v71m1-71v64m1-64v64m1-64v63m1-63v66m1-66v61m1-61v61m1-65v68m1-67v66m1-63v63m1-66v66m1-65v65m1-67v67m1-64v64m1-64v65m1-64v66m1-69v68m1-68v67m1-71v68m1-64v64m1-61v61m1-61v61m1-65v68m1-64v69m1-72v64m1-64v64m1-64v64m1-64v64m1-61v63m1-63v63m1-63v63m1-65v66m1-68v68m1-67v66m1-67v68m1-67v67m1-65v65m1-65v65m1-65v66m1-68v67m1-66v66m1-65v64m1-64v64m1-66v66m1-64v62m1-62v62m1-62v62m1-64v66m1-64v68m1-73v69m1-68v74m1-69v64m1-64v64m1-64v64m1-64v64m1-64v61m1-61v61m1-64v64m1-64v64m1-66v68m1-66v69m1-66v63m1-63v64m1-64v65m1-68v67m1-64v64m1-66v66m1-64v61m1-61v61m1-66v66m1-64v66m1-66v67m1-63v70m1-70v63m1-63v60m1-62v62m1-62v62m1-62v64m1-64v64m1-64v64m1-62v62m1-64v64m1-62v62m1-62v60m1-62v62m1-65v65m1-63v66m1-66v65m1-65v65m1-65v65m1-65v65m1-62v60m1-63v63m1-60v60m1-62v62m1-63v65m1-65v63m1-59v59m1-59v59m1-59v62m1-66v66m1-62v62m1-62v62m1-62v62m1-62v62m1-62v62m1-62v62m1-62v68m1-70v63m1-61v61m1-61v64m1-64v59m1-62v62m1-62v62m1-63v63m1-62v62m1-62v62m1-65v65m1-58v58m1-60v60m1-58v58m1-61v61m1-59v62m1-61v61m1-61v61m1-60v58m1-58v58m1-58v58m1-58v58m1-63v63m1-61v61m1-61v61m1-61v63m1-66v66m1-59v59m1-61v61m1-59v56m1-56v56m1-62v66m1-63v60m1-61v61m1-61v61m1-60v65m1-65v61m1-61v61m1-64v68m1-65v61m1-60v60m1-60v58m1-58v59m1-59v59m1-59v59m1-59v60m1-60v60m1-59v59m1-56v56m1-59v59m1-59v60m1-58v54m1-53v53m1-52v52m1-52v54m1-56v56m1-59v57m1-55v55m1-58v62m1-61v60m1-58v58m1-61v62m1-58v57m1-57v57m1-55v55m1-55v52m1-52v52m1-52v55m1-55v55m1-55v54m1-52v50m1-50v50m1-49v49m1-51v54m1-54v54m1-54v59m1-62v57m1-54v51m1-50v50m1-53v53m1-48v48m1-53v53m1-51v51m1-51v51m1-51v51m1-51v51m1-50v53m1-53v51m1-48v47m1-47v50m1-49v52m1-52v47m1-53v53m1-50v52m1-52v52m1-51v51m1-48v48m1-48v45m1-46v46m1-47v48m1-47v47m1-47v47m1-46v46m1-45v47m1-49v48m1-45v45m1-45v45m1-45v45m1-44v44m1-44v42m1-42v42m1-43v43m1-43v43m1-43v43m1-43v42m1-40v42m1-42v42m1-42v42m1-41v44m1-46v43m1-43v43m1-42v42m1-42v42m1-46v46m1-45v45m1-45v46m1-42v42m1-44v44m1-44v44m1-41v41m1-39v39m1-40v43m1-44v40m1-39v39m1-39v39m1-39v39m1-37v39m1-39v36m1-37v41m1-41v37m1-37v37m1-35v35m1-35v35m1-34v34m1-37v36m1-34v36m1-36v34m1-32v32m1-32v35m1-38v35m1-32v32m1-33v33m1-33v33m1-31v33m1-33v32m1-34v37m1-34v30m1-30v30m1-30v30m1-31v33m1-33v33m1-32v32m1-32v32m1-33v33m1-34v34m1-30v30m1-30v30m1-30v30m1-30v30m1-30v30m1-30v33m1-34v31m1-30v30m1-33v32m1-30v30m1-30v30m1-30v30m1-30v30m1-30v29m1-28v28m1-26v28m1-30v28m1-26v27m1-27v27m1-26v26m1-26v26m1-26v26m1-28v27m1-25v25m1-25v25m1-25v25m1-24v24m1-24v24m1-25v25m1-26v26m1-26v26m1-25v25m1-23v23m1-23v23m1-23v23m1-26v26m1-24v24m1-24v24m1-23v22m1-21v21m1-21v21m1-23v24m1-24v24m1-24v24m1-23v23m1-23v23m1-22v24m1-24v21m1-23v23m1-22v22m1-22v22m1-20v20m1-20v20m1-20v20m1-20v20m1-20v20m1-20v20m1-21v24m1-23v20m1-20v20m1-20v20m1-20v23m1-23v20m1-20v23m1-23v20m1-18v19m1-19v19m1-19v19m1-20v20m1-20v20m1-20v20m1-20v20m1-18v18m1-19v19m1-18v18m1-18v18m1-18v18m1-17v17m1-17v17m1-19v21m1-19v16m1-18v18m1-16v16m1-16v16m1-16v17m1-18v18m1-18v18m1-18v18m1-18v17m1-16v16m1-15v15m1-15v15m1-16v16m1-16v16m1-16v16m1-16v17m1-17v17m1-17v16m1-15v15m1-16v17m1-17v17m1-16v14m1-14v14m1-14v14m1-13v13m1-14v14m1-16v16m1-14v14m1-14v14m1-14v14m1-14v14m1-13v13m1-12v12m1-12v14m1-14v14m1-15v15m1-15v14m1-13v14m1-14v14m1-15v14m1-13v13m1-13v12m1-13v13m1-12v12m1-13v14m1-13v12m1-12v13m1-15v14m1-12v12m1-12v13m1-13v13m1-13v13m1-13v13m1-13v12m1-11v11m1-11v11m1-12v12m1-12v12m1-12v14m1-14v14m1-14v13m1-13v13m1-11v10m1-10v10m1-10v10m1-10v10m1-10v10m1-10v10m1-10v11m1-11v11m1-11v11m1-11v11m1-12v12m1-11v11m1-11v11m1-11v10m1-10v10m1-11v11m1-10v10m1-10v11m1-13v12m1-10v13m1-13v11m1-11v11m1-12v11m1-10v10m1-10v10m1-10v12m1-12v10m1-10v11m1-11v11m1-11v11m1-11v10m1-11v12m1-12v12m1-12v11m1-12v12m1-11v11m1-11v11m1-11v11m1-10v10m1-10v10m1-10v10m1-10v10m1-11v11m1-11v11m1-11v11m1-11v11m1-11v13m1-13v12m1-12v12m1-12v12m1-14v13m1-11v11m1-9v9m1-10v10m1-10v10m1-11v11m1-11v11m1-9v9m1-10v10m1-10v13m1-13v11m1-11v11m1-11v10m1-10v10m1-10v10m1-10v11m1-11v13m1-13v11m1-10v10m1-10v12m1-12v9m1-11v11m1-11v11m1-11v11m1-9v9m1-10v10m1-9v9m1-9v9m1-10v10m1-10v10m1-9v9m1-9v9m1-9v12m1-12v9m1-9v10m1-12v12m1-12v12m1-11v11m1-10v10m1-10v10m1-10v10m1-12v12m1-12v12m1-10v10m1-13v13m1-12v11m1-11v11m1-11v11m1-9v9m1-10v10m1-10v10m1-12v13m1-11v10m1-10v11m1-11v11m1-11v11m1-11v11m1-10v11m1-11v12m1-12v9m1-9v9m1-9v9m1-9v9m1-11v11m1-11v11m1-11v11m1-11v11m1-10v10m1-10v10m1-10v12m1-11v9m1-9v9m1-11v12m1-11v10m1-10v11m1-11v10m1-10v11m1-11v10m1-10v10m1-11v11m1-11v11m1-10v10m1-11v11m1-10v10m1-10v11m1-10v9m1-10v10m1-10v10m1-10v12m1-14v12m1-11v11m1-11v11m1-11v11m1-11v11m1-11v11m1-10v10m1-9v9m1-9v9m1-13v13m1-11v11m1-10v10m1-10v10m1-9v9m1-9v9m1-9v9m1-10v10m1-10v10m1-10v10m1-11v12m1-12v12m1-12v14m1-14v12m1-11v10m1-9v9m1-9v10m1-10v10m1-10v10m1-10v9m1-9v9m1-9v9m1-9v9m1-10v12m1-12v10m1-10v10"/>
</g>
<g filter="url(#bl)">
<path fill="url(#w1)" d="M71 426.1L77 425.6L83 425.8L89 426.2L95 425.8L101 425.6L107 426.0L113 426.1L119 425.6L125 425.8L131 426.2L137 425.8L143 425.6L149 426.0L155 426.1L161 425.6L167 425.8L173 426.2L179 425.8L185 425.6L191 426.0L197 426.1L203 425.6L209 425.8L215 426.2L221 425.8L227 425.6L233 426.0L239 425.9L245 425.3L251 425.3L257 425.6L263 425.1L269 424.7L275 425.0L281 424.8L287 424.1L293 424.1L299 424.3L305 423.7L311 423.2L317 423.2L323 422.8L329 421.9L335 421.6L341 421.6L347 420.8L353 420.1L359 420.1L365 419.7L371 418.8L377 418.5L383 418.5L389 417.7L395 417.0L401 417.0L407 416.5L413 415.5L419 415.2L425 415.2L431 414.3L437 413.5L443 413.5L449 413.0L455 412.0L461 411.6L467 411.5L473 410.6L479 409.7L485 409.6L491 409.1L497 408.0L503 407.6L509 407.4L515 406.4L521 405.5L527 405.3L533 404.6L539 403.5L545 403.0L551 402.8L557 402.1L563 401.5L569 401.6L575 401.3L581 400.5L587 400.4L593 400.5L599 400.0L605 399.5L611 399.8L617 399.7L623 399.1L629 399.2L635 399.5L641 399.1L647 398.7L653 399.1L659 399.1L665 398.5L671 398.7L677 399.1L683 398.7L689 398.5L695 399.0L701 399.0L707 398.5L713 398.7L719 399.1L725 398.8L731 398.6L737 399.0L743 399.1L749 398.6L755 398.9L761 399.5L767 399.3L773 399.3L779 399.9L785 400.1L791 399.8L797 400.3L803 401.0L809 400.9L815 401.0L821 401.7L827 402.0L833 402.0L839 402.6L845 403.5L851 403.6L857 403.9L863 404.8L869 405.4L875 405.5L881 406.4L887 407.5L893 407.9L899 408.3L905 409.5L911 410.3L917 410.6L923 411.5L929 412.7L935 413.1L941 413.6L947 414.9L953 415.6L959 415.6L965 416.3L971 417.3L977 417.5L983 417.7L989 418.7L995 419.3L1001 419.3L1007 420.0L1013 420.8L1019 421.0L1025 421.2L1031 422.1L1037 422.5L1043 422.3L1049 422.8L1055 423.5L1061 423.5L1067 423.6L1073 424.3L1079 424.5L1085 424.3L1091 424.6L1097 425.2L1103 425.1L1109 425.0L1115 425.6L1121 425.6L1127 425.2L1133 425.4L1139 425.8L1145 425.5L1151 425.3L1157 425.8L1163 425.8L1169 425.4L1175 425.6L1181 426.0L1187 425.6L1193 425.4L1199 425.9L1205 425.9L1211 425.5L1217 425.6L1223 426.1L1229 425.7L1235 425.5L1241 426.0L1247 426.0L1253 425.5L1259 425.7L1265 426.1L1269 426.0L1269 431.6L1265 431.9L1259 431.2L1253 430.9L1247 431.7L1241 431.6L1235 430.8L1229 431.2L1223 431.8L1217 431.1L1211 430.7L1205 431.5L1199 431.4L1193 430.6L1187 431.0L1181 431.6L1175 430.9L1169 430.6L1163 431.4L1157 431.3L1151 430.5L1145 430.9L1139 431.5L1133 430.8L1127 430.5L1121 431.3L1115 431.2L1109 430.4L1103 430.6L1097 431.0L1091 430.2L1085 429.7L1079 430.3L1073 430.1L1067 429.1L1061 429.4L1055 429.9L1049 429.1L1043 428.7L1037 429.4L1031 429.2L1025 428.2L1019 428.3L1013 428.7L1007 427.7L1001 427.2L995 427.7L989 427.4L983 426.4L977 426.6L971 426.9L965 426.0L959 425.5L953 426.1L947 425.7L941 424.7L935 424.8L929 425.1L923 424.2L917 423.6L911 424.1L905 423.7L899 422.6L893 422.7L887 423.0L881 422.0L875 421.4L869 421.9L863 421.6L857 420.7L851 420.9L845 421.3L839 420.4L833 419.9L827 420.5L821 420.4L815 419.5L809 419.9L803 420.4L797 419.6L791 419.3L785 419.9L779 419.7L773 418.8L767 419.1L761 419.6L755 418.7L749 418.3L743 419.1L737 419.1L731 418.3L725 418.7L719 419.3L713 418.7L707 418.4L701 419.2L695 419.1L689 418.4L683 418.8L677 419.4L671 418.7L665 418.5L659 419.3L653 419.3L647 418.6L641 419.0L635 419.7L629 419.1L623 418.8L617 419.8L611 419.9L605 419.4L599 420.0L593 420.8L587 420.4L581 420.2L575 421.2L569 421.3L563 420.6L557 421.2L551 422.0L545 421.4L539 421.3L533 422.3L527 422.4L521 421.8L515 422.3L509 423.1L503 422.6L497 422.6L491 423.6L485 423.7L479 423.2L473 423.8L467 424.6L461 424.1L455 424.0L449 424.9L443 425.1L437 424.5L431 425.1L425 425.9L419 425.4L413 425.3L407 426.3L401 426.4L395 425.9L389 426.5L383 427.3L377 426.9L371 426.8L365 427.8L359 428.0L353 427.4L347 428.1L341 428.9L335 428.5L329 428.4L323 429.4L317 429.6L311 429.0L305 429.6L299 430.3L293 429.7L287 429.5L281 430.5L275 430.5L269 429.9L263 430.4L257 431.2L251 430.7L245 430.5L239 431.5L233 431.6L227 430.9L221 431.3L215 431.9L209 431.2L203 430.9L197 431.8L191 431.7L185 430.9L179 431.3L173 431.9L167 431.2L161 430.9L155 431.8L149 431.7L143 430.9L137 431.3L131 431.9L125 431.2L119 430.9L113 431.8L107 431.7L101 430.9L95 431.3L89 431.9L83 431.2L77 430.9L71 431.8Z"/>
<path fill="url(#w2)" d="M71 427.6L77 427.0L83 427.2L89 427.7L95 427.3L101 427.0L107 427.5L113 427.6L119 427.0L125 427.2L131 427.7L137 427.3L143 427.0L149 427.5L155 427.6L161 427.0L167 427.2L173 427.7L179 427.3L185 427.0L191 427.5L197 427.6L203 427.0L209 427.2L215 427.7L221 427.3L227 427.0L233 427.5L239 427.4L245 426.6L251 426.7L257 427.1L263 426.5L269 426.1L275 426.5L281 426.3L287 425.5L293 425.6L299 425.9L305 425.3L311 424.8L317 425.0L323 424.7L329 423.7L335 423.5L341 423.7L347 422.9L353 422.2L359 422.4L365 422.1L371 421.1L377 421.0L383 421.1L389 420.3L395 419.6L401 419.8L407 419.5L413 418.5L419 418.3L425 418.4L431 417.6L437 416.9L443 417.1L449 416.7L455 415.7L461 415.5L467 415.6L473 414.7L479 414.0L485 414.1L491 413.7L497 412.6L503 412.4L509 412.5L515 411.5L521 410.7L527 410.8L533 410.4L539 409.3L545 409.0L551 409.0L557 408.3L563 407.7L569 408.1L575 407.8L581 407.0L587 406.9L593 407.2L599 406.5L605 406.0L611 406.4L617 406.3L623 405.5L629 405.7L635 406.1L641 405.6L647 405.2L653 405.7L659 405.7L665 405.1L671 405.2L677 405.7L683 405.3L689 405.0L695 405.6L701 405.6L707 405.0L713 405.3L719 405.8L725 405.3L731 405.0L737 405.6L743 405.7L749 405.1L755 405.4L761 406.1L767 405.8L773 405.7L779 406.4L785 406.6L791 406.2L797 406.6L803 407.3L809 407.1L815 407.0L821 407.8L827 408.1L833 407.8L839 408.4L845 409.3L851 409.2L857 409.3L863 410.3L869 410.7L875 410.6L881 411.4L887 412.5L893 412.6L899 412.9L905 414.0L911 414.6L917 414.7L923 415.5L929 416.6L935 416.7L941 417.0L947 418.2L953 418.8L959 418.6L965 419.3L971 420.2L977 420.2L983 420.3L989 421.3L995 421.8L1001 421.6L1007 422.2L1013 423.1L1019 423.1L1025 423.2L1031 424.1L1037 424.4L1043 424.1L1049 424.6L1055 425.3L1061 425.1L1067 425.1L1073 425.9L1079 426.1L1085 425.7L1091 426.1L1097 426.8L1103 426.5L1109 426.4L1115 427.1L1121 427.1L1127 426.6L1133 426.8L1139 427.3L1145 426.9L1151 426.6L1157 427.2L1163 427.3L1169 426.7L1175 427.0L1181 427.5L1187 427.0L1193 426.8L1199 427.4L1205 427.4L1211 426.8L1217 427.1L1223 427.6L1229 427.2L1235 426.9L1241 427.5L1247 427.5L1253 426.9L1259 427.2L1265 427.7L1269 427.5L1269 430.5L1265 430.8L1259 430.1L1253 429.8L1247 430.6L1241 430.5L1235 429.8L1229 430.1L1223 430.6L1217 430.0L1211 429.7L1205 430.4L1199 430.4L1193 429.6L1187 430.0L1181 430.5L1175 429.9L1169 429.6L1163 430.3L1157 430.2L1151 429.5L1145 429.8L1139 430.4L1133 429.7L1127 429.4L1121 430.2L1115 430.1L1109 429.3L1103 429.5L1097 429.9L1091 429.1L1085 428.6L1079 429.2L1073 429.0L1067 428.1L1061 428.3L1055 428.7L1049 427.9L1043 427.5L1037 428.1L1031 427.8L1025 426.8L1019 426.9L1013 427.2L1007 426.3L1001 425.7L995 426.1L989 425.8L983 424.8L977 424.8L971 425.1L965 424.2L959 423.6L953 424.1L947 423.7L941 422.6L935 422.6L929 422.8L923 421.8L917 421.2L911 421.5L905 421.1L899 420.0L893 420.0L887 420.1L881 419.1L875 418.5L869 418.8L863 418.5L857 417.5L851 417.7L845 418.0L839 417.1L833 416.6L827 417.1L821 416.9L815 416.1L809 416.4L803 416.8L797 416.1L791 415.7L785 416.3L779 416.1L773 415.2L767 415.4L761 415.9L755 415.1L749 414.7L743 415.4L737 415.4L731 414.7L725 415.1L719 415.6L713 415.0L707 414.7L701 415.5L695 415.4L689 414.7L683 415.1L677 415.6L671 415.0L665 414.8L659 415.6L653 415.6L647 414.9L641 415.3L635 416.0L629 415.4L623 415.2L617 416.1L611 416.2L605 415.7L599 416.3L593 417.1L587 416.7L581 416.6L575 417.5L569 417.6L563 417.1L557 417.7L551 418.4L545 418.0L539 418.0L533 419.0L527 419.2L521 418.7L515 419.4L509 420.2L503 419.9L497 419.9L491 420.9L485 421.1L479 420.7L473 421.3L467 422.1L461 421.7L455 421.7L449 422.7L443 422.9L437 422.4L431 423.0L425 423.8L419 423.5L413 423.5L407 424.5L401 424.7L395 424.2L389 424.8L383 425.6L377 425.3L371 425.3L365 426.3L359 426.5L353 426.0L347 426.7L341 427.5L335 427.1L329 427.1L323 428.2L317 428.4L311 427.9L305 428.4L299 429.1L293 428.6L287 428.5L281 429.4L275 429.4L269 428.9L263 429.4L257 430.1L251 429.6L245 429.5L239 430.4L233 430.5L227 429.9L221 430.3L215 430.8L209 430.2L203 429.9L197 430.7L191 430.6L185 429.9L179 430.3L173 430.8L167 430.2L161 429.9L155 430.7L149 430.6L143 429.9L137 430.3L131 430.8L125 430.2L119 429.9L113 430.7L107 430.6L101 429.9L95 430.3L89 430.8L83 430.2L77 429.9L71 430.7Z"/>
<path fill="url(#w3)" d="M71 428.6L77 427.9L83 428.2L89 428.7L95 428.2L101 427.9L107 428.5L113 428.6L119 427.9L125 428.2L131 428.7L137 428.2L143 427.9L149 428.5L155 428.6L161 427.9L167 428.2L173 428.7L179 428.2L185 427.9L191 428.5L197 428.6L203 427.9L209 428.2L215 428.7L221 428.2L227 427.9L233 428.5L239 428.4L245 427.6L251 427.7L257 428.1L263 427.4L269 427.0L275 427.4L281 427.3L287 426.5L293 426.6L299 427.0L305 426.3L311 425.8L317 426.1L323 425.8L329 424.9L335 424.8L341 425.0L347 424.2L353 423.5L359 423.9L365 423.6L371 422.6L377 422.5L383 422.8L389 421.9L395 421.3L401 421.6L407 421.3L413 420.3L419 420.2L425 420.5L431 419.6L437 419.0L443 419.3L449 419.0L455 418.0L461 417.9L467 418.1L473 417.2L479 416.5L485 416.8L491 416.5L497 415.4L503 415.3L509 415.5L515 414.6L521 413.9L527 414.1L533 413.8L539 412.7L545 412.6L551 412.8L557 412.0L563 411.5L569 411.9L575 411.7L581 410.8L587 410.8L593 411.1L599 410.4L605 409.9L611 410.3L617 410.2L623 409.4L629 409.6L635 410.0L641 409.5L647 409.1L653 409.7L659 409.7L665 408.9L671 409.1L677 409.7L683 409.2L689 408.9L695 409.5L701 409.6L707 408.9L713 409.1L719 409.7L725 409.2L731 408.9L737 409.5L743 409.6L749 408.9L755 409.3L761 410.0L767 409.6L773 409.5L779 410.3L785 410.5L791 410.0L797 410.4L803 411.1L809 410.8L815 410.6L821 411.4L827 411.7L833 411.2L839 411.8L845 412.7L851 412.5L857 412.5L863 413.5L869 413.9L875 413.7L881 414.4L887 415.5L893 415.5L899 415.6L905 416.8L911 417.3L917 417.1L923 417.9L929 418.9L935 419.0L941 419.1L947 420.3L953 420.8L959 420.5L965 421.1L971 422.0L977 421.9L983 421.9L989 422.9L995 423.3L1001 423.0L1007 423.6L1013 424.6L1019 424.4L1025 424.5L1031 425.4L1037 425.7L1043 425.2L1049 425.7L1055 426.4L1061 426.2L1067 426.0L1073 426.9L1079 427.1L1085 426.6L1091 427.1L1097 427.8L1103 427.5L1109 427.4L1115 428.1L1121 428.1L1127 427.5L1133 427.8L1139 428.3L1145 427.9L1151 427.5L1157 428.2L1163 428.3L1169 427.6L1175 427.9L1181 428.5L1187 428.0L1193 427.7L1199 428.3L1205 428.4L1211 427.8L1217 428.0L1223 428.6L1229 428.1L1235 427.8L1241 428.5L1247 428.5L1253 427.9L1259 428.1L1265 428.7L1269 428.5L1269 429.8L1265 430.0L1259 429.4L1253 429.1L1247 429.8L1241 429.8L1235 429.1L1229 429.4L1223 429.9L1217 429.3L1211 429.0L1205 429.7L1199 429.6L1193 428.9L1187 429.3L1181 429.8L1175 429.2L1169 428.9L1163 429.6L1157 429.5L1151 428.8L1145 429.1L1139 429.6L1133 429.0L1127 428.7L1121 429.4L1115 429.4L1109 428.6L1103 428.8L1097 429.2L1091 428.4L1085 427.9L1079 428.5L1073 428.2L1067 427.3L1061 427.5L1055 427.9L1049 427.1L1043 426.7L1037 427.2L1031 427.0L1025 426.0L1019 426.0L1013 426.2L1007 425.3L1001 424.7L995 425.1L989 424.7L983 423.7L977 423.8L971 424.0L965 423.1L959 422.5L953 422.9L947 422.5L941 421.4L935 421.3L929 421.4L923 420.4L917 419.7L911 420.0L905 419.5L899 418.4L893 418.4L887 418.5L881 417.4L875 416.7L869 417.1L863 416.7L857 415.7L851 415.8L845 416.1L839 415.2L833 414.6L827 415.2L821 415.0L815 414.1L809 414.4L803 414.8L797 414.0L791 413.6L785 414.2L779 414.0L773 413.1L767 413.4L761 413.7L755 413.0L749 412.6L743 413.3L737 413.3L731 412.6L725 413.0L719 413.5L713 412.9L707 412.6L701 413.3L695 413.3L689 412.6L683 413.0L677 413.5L671 412.9L665 412.7L659 413.5L653 413.5L647 412.8L641 413.2L635 413.8L629 413.3L623 413.1L617 413.9L611 414.1L605 413.6L599 414.2L593 415.0L587 414.6L581 414.5L575 415.4L569 415.6L563 415.1L557 415.6L551 416.4L545 416.1L539 416.1L533 417.1L527 417.4L521 417.0L515 417.7L509 418.5L503 418.2L497 418.3L491 419.3L485 419.6L479 419.2L473 419.9L467 420.7L461 420.4L455 420.4L449 421.4L443 421.6L437 421.2L431 421.8L425 422.6L419 422.3L413 422.3L407 423.3L401 423.6L395 423.1L389 423.8L383 424.6L377 424.3L371 424.3L365 425.3L359 425.6L353 425.1L347 425.8L341 426.6L335 426.3L329 426.3L323 427.3L317 427.6L311 427.2L305 427.7L299 428.4L293 427.9L287 427.8L281 428.6L275 428.7L269 428.2L263 428.7L257 429.4L251 428.9L245 428.8L239 429.7L233 429.8L227 429.2L221 429.5L215 430.1L209 429.5L203 429.2L197 429.9L191 429.9L185 429.2L179 429.5L173 430.1L167 429.5L161 429.2L155 429.9L149 429.9L143 429.2L137 429.5L131 430.1L125 429.5L119 429.2L113 429.9L107 429.9L101 429.2L95 429.5L89 430.1L83 429.5L77 429.2L71 429.9Z"/>
</g>
<g stroke="#fff" stroke-width="1" stroke-dasharray="18.5 5.5"><path d="M70.5 3V544" stroke-dashoffset=".5"/><path d="M1269.5 3V525.5" stroke-dasharray="8.3 5.5 13 3 12 2.5 10 3.5" /></g>
<g fill="#fff"><path d="M70 51 l6.5 6.5 h-3.8 v8.5 h-2.7z"/><path d="M70 147 l6.5 6.5 h-3.8 v8.5 h-2.7z"/><path d="M70 252 l6.5 6.5 h-3.8 v8.5 h-2.7z"/><path d="M70 427 l6.5 6.5 h-3.8 v8.5 h-2.7z"/><path d="M1270 53 l-6.5 -6.5 h3.8 v-8.5 h2.7z"/><path d="M1270 161 l-6.5 -6.5 h3.8 v-8.5 h2.7z"/><path d="M1270 264 l-6.5 -6.5 h3.8 v-8.5 h2.7z"/><path d="M1270 433 l-6.5 -6.5 h3.8 v-8.5 h2.7z"/></g>
<path d="M1270 19.5 l8 -4 v8z" fill="#00f0f4"/>
<path d="M670.5 544 l-4 7.5 h8z" fill="#00f0f4"/>
<g font-family="Liberation Sans, sans-serif">
<text x="57" y="50" fill="#00e0e8" font-size="10">C3</text><path d="M60.5 54.1 v-1.7 h9.5" stroke="#00e0e8" stroke-width="1.4" fill="none"/>
<text x="57" y="172" fill="#00c000" font-size="10">C4</text><path d="M60.5 176.9 v-1.7 h9.5" stroke="#00c000" stroke-width="1.4" fill="none"/>
<text x="57" y="272" fill="#e8e800" font-size="10">C1</text><path d="M60.5 276.5 v-1.7 h9.5" stroke="#e8e800" stroke-width="1.4" fill="none"/>
<rect x="54" y="421" width="16" height="11" rx="2" fill="#e4fcdc"/>
<text x="57" y="431" fill="#223" font-size="10">C5</text>
<path d="M60.5 436 v-2 h9.5" stroke="#d8ffd0" stroke-width="1.2" fill="none"/>
</g>
<g font-family="Liberation Sans, sans-serif" font-size="11" fill="#fff">
<text x="76" y="35">torque_trigger</text><rect x="76" y="37" width="70" height="1" shape-rendering="crispEdges"/><path d="M71.0 52.0 L111.0 37.5" stroke="#fff" stroke-width="1" fill="none"/>
<text x="572" y="63">Torque_Sensor</text><rect x="572" y="65" width="78" height="1" shape-rendering="crispEdges"/><path d="M612.0 65.5 L661.0 80.5" stroke="#fff" stroke-width="1" fill="none"/>
<text x="495" y="272">AOUT1_CURRENT</text><rect x="495" y="274" width="98" height="1" shape-rendering="crispEdges"/><path d="M547.0 274.5 L606.0 289.5" stroke="#fff" stroke-width="1" fill="none"/>
<text x="384" y="412">VM_Current</text><rect x="384" y="414" width="61" height="1" shape-rendering="crispEdges"/><path d="M399.0 414.5 L456.0 421.5" stroke="#fff" stroke-width="1" fill="none"/>
</g>
<g font-family="Liberation Sans, sans-serif" font-size="11" fill="#fff"><text x="74.5" y="540">C1</text><text x="74.5" y="540">C3</text><text x="74.5" y="540">C4</text><text x="74.5" y="540">C5</text><text x="1252" y="540">C1</text><text x="1252" y="540">C3</text><text x="1252" y="540">C4</text><text x="1252" y="540">C5</text></g>
<g font-family="Liberation Sans, sans-serif" font-size="12" fill="#fffff0">
<text x="65.5" y="16" text-anchor="end" word-spacing="1">12.75 A</text>
<text x="65.5" y="76" text-anchor="end" word-spacing="1">10.75 A</text>
<text x="65.5" y="144" text-anchor="end" word-spacing="1">8.75 A</text>
<text x="65.5" y="211" text-anchor="end" word-spacing="1">6.75 A</text>
<text x="65.5" y="279" text-anchor="end" word-spacing="1">4.75 A</text>
<text x="65.5" y="347" text-anchor="end" word-spacing="1">2.75 A</text>
<text x="65.5" y="414" text-anchor="end" word-spacing="1">750 mA</text>
<text x="65.5" y="482" text-anchor="end" word-spacing="1">-1.25 A</text>
<text x="65.5" y="542" text-anchor="end" word-spacing="1">-3.25 A</text>
<text x="70" y="558">-5 s</text>
<text x="190" y="558" text-anchor="middle">-4 s</text>
<text x="310" y="558" text-anchor="middle">-3 s</text>
<text x="430" y="558" text-anchor="middle">-2 s</text>
<text x="550" y="558" text-anchor="middle">-1 s</text>
<text x="670" y="558" text-anchor="middle">0 s</text>
<text x="790" y="558" text-anchor="middle">1 s</text>
<text x="910" y="558" text-anchor="middle">2 s</text>
<text x="1030" y="558" text-anchor="middle">3 s</text>
<text x="1150" y="558" text-anchor="middle">4 s</text>
<text x="1270" y="558" text-anchor="end">5 s</text>
</g>
</svg>
<div id="vbg"></div><div id="mline"></div>
<div class="abs" style="left:5px;top:576px;font-weight:bold">Measure</div>
<div class="abs" style="left:5px;top:591px">value</div>
<div class="abs" style="left:5px;top:608px">status</div>
<div class="mh" style="left:99px">P1:max(C1)</div>
<div class="mv" style="left:99px">2.52 A</div>
<svg class="ck" style="left:184px" width="12" height="11" viewBox="0 0 12 11"><path d="M1.2 6 L3.9 8.7 L10.6 1.4" stroke="#10e810" stroke-width="2.3" stroke-linejoin="bevel" fill="none"/></svg>
<div class="mh" style="left:196px">P2:pkpk(C4)</div>
<div class="mv" style="left:196px">3.760 V</div>
<svg class="ck" style="left:281px" width="12" height="11" viewBox="0 0 12 11"><path d="M1.2 6 L3.9 8.7 L10.6 1.4" stroke="#10e810" stroke-width="2.3" stroke-linejoin="bevel" fill="none"/></svg>
<div class="mh" style="left:293px">P3:mean(C5)</div>
<div class="mv" style="left:293px">428 mA</div>
<svg class="ck" style="left:378px" width="12" height="11" viewBox="0 0 12 11"><path d="M1.2 6 L3.9 8.7 L10.6 1.4" stroke="#10e810" stroke-width="2.3" stroke-linejoin="bevel" fill="none"/></svg>
<div class="mh" style="left:390px">P4:min(C4)</div>
<div class="mv" style="left:390px">-136 mV</div>
<svg class="ck" style="left:475px" width="12" height="11" viewBox="0 0 12 11"><path d="M1.2 6 L3.9 8.7 L10.6 1.4" stroke="#10e810" stroke-width="2.3" stroke-linejoin="bevel" fill="none"/></svg>
<div class="mh" style="left:487px">P5:max(C4)</div>
<div class="mv" style="left:487px">3.62 V</div>
<svg class="ck" style="left:572px" width="12" height="11" viewBox="0 0 12 11"><path d="M1.2 6 L3.9 8.7 L10.6 1.4" stroke="#10e810" stroke-width="2.3" stroke-linejoin="bevel" fill="none"/></svg>
<div class="mh" style="left:584px">P6:rms(C1)</div>
<div class="mv" style="left:584px">1.095 A</div>
<svg class="ck" style="left:669px" width="12" height="11" viewBox="0 0 12 11"><path d="M1.2 6 L3.9 8.7 L10.6 1.4" stroke="#10e810" stroke-width="2.3" stroke-linejoin="bevel" fill="none"/></svg>
<div class="mh" style="left:681px">P7:rms(C5)</div>
<div class="mv" style="left:681px">529 mA</div>
<svg class="ck" style="left:766px" width="12" height="11" viewBox="0 0 12 11"><path d="M1.2 6 L3.9 8.7 L10.6 1.4" stroke="#10e810" stroke-width="2.3" stroke-linejoin="bevel" fill="none"/></svg>
<div class="mh" style="left:778px">P8:freq(C1)</div>
<div class="mv" style="left:778px">46.891940 Hz</div>
<svg class="ck" style="left:863px" width="12" height="11" viewBox="0 0 12 11"><rect x="4" y="3" width="3.6" height="3" fill="none" stroke="#fff" stroke-width="1"/><path d="M4 7v2.5M7.6 7v2.5" stroke="#fff" stroke-width="1"/><path d="M.8 .5 L10.8 10.5 M10.8 .5 L.8 10.5" stroke="#ffff00" stroke-width="1.1" fill="none"/></svg>
<div class="mh dim" style="left:875px">P9:- - -</div>
<div class="mh dim" style="left:972px">P10:freq(C5)</div>
<div class="mh dim" style="left:1069px">P11:- - -</div>
<div class="mh dim" style="left:1166px">P12:- - -</div>
<div class="ch" style="left:4px;background:#404040;"><div class="hd" style="background:#ffff00"></div><div class="nm" style="color:#222200">C1</div><div class="tag" style="left:46px;width:26px;color:#ffff00">BwL</div><div class="tag" style="left:73px;width:21px;color:#ffff00">DC</div><div class="r" style="top:17px">2.00 A/div</div><div class="r" style="top:32px">-50.0 mA</div><div class="l" style="top:52px"><svg width="8" height="13" viewBox="0 0 8 13" style="display:block;margin-top:2px"><path d="M4.5 1v10.5M2.3 8.5l2.2 3 2.2-3" stroke="#e8e8e8" stroke-width="1" fill="none"/></svg></div><div class="r" style="top:52px">338.5 mA</div><div class="l" style="top:67px"><svg width="8" height="13" viewBox="0 0 8 13" style="display:block;margin-top:2px"><path d="M4.5 13V1.5M2.3 4.5l2.2-3 2.2 3" stroke="#e8e8e8" stroke-width="1" fill="none"/></svg></div><div class="r" style="top:67px">599.3 mA</div></div>
<div class="ch" style="left:104px;background:#404040;"><div class="hd" style="background:#00ffff"></div><div class="nm" style="color:#003838">C3</div><div class="tag" style="left:31px;width:26px;color:#00ffff">BwL</div><div class="tag" style="left:57.5px;width:36.5px;color:#00ffff">DC1M</div><div class="r" style="top:17px">5.00 V/div</div><div class="r" style="top:32px">16.340 V</div><div class="l" style="top:52px"><svg width="8" height="13" viewBox="0 0 8 13" style="display:block;margin-top:2px"><path d="M4.5 1v10.5M2.3 8.5l2.2 3 2.2-3" stroke="#e8e8e8" stroke-width="1" fill="none"/></svg></div><div class="r" style="top:52px">-27 mV</div><div class="l" style="top:67px"><svg width="8" height="13" viewBox="0 0 8 13" style="display:block;margin-top:2px"><path d="M4.5 13V1.5M2.3 4.5l2.2-3 2.2 3" stroke="#e8e8e8" stroke-width="1" fill="none"/></svg></div><div class="r" style="top:67px">-25 mV</div></div>
<div class="ch" style="left:204px;background:#404040;"><div class="hd" style="background:#00c000"></div><div class="nm" style="color:#005000">C4</div><div class="tag" style="left:31px;width:26px;color:#00c000">BwL</div><div class="tag" style="left:57.5px;width:36.5px;color:#00c000">DC1M</div><div class="r" style="top:17px">2.00 V/div</div><div class="r" style="top:32px">2.9000 V</div><div class="l" style="top:52px"><svg width="8" height="13" viewBox="0 0 8 13" style="display:block;margin-top:2px"><path d="M4.5 1v10.5M2.3 8.5l2.2 3 2.2-3" stroke="#e8e8e8" stroke-width="1" fill="none"/></svg></div><div class="r" style="top:52px">441.7 mV</div><div class="l" style="top:67px"><svg width="8" height="13" viewBox="0 0 8 13" style="display:block;margin-top:2px"><path d="M4.5 13V1.5M2.3 4.5l2.2-3 2.2 3" stroke="#e8e8e8" stroke-width="1" fill="none"/></svg></div><div class="r" style="top:67px">728.0 mV</div></div>
<div class="ch" style="left:304px;background:#2b4e6e;overflow:visible;"><div class="hd" style="background:#e0ffdc"></div><div class="nm" style="color:#202020">C5</div><div class="tag nb" style="left:46px;width:26px;color:#f0fff0">BwL</div><div class="tag nb" style="left:73px;width:21px;color:#f0fff0">DC</div><div class="r" style="top:17px">2.00 A/div</div><div class="r" style="top:32px">-4.7500 A</div><div class="l" style="top:52px"><svg width="8" height="13" viewBox="0 0 8 13" style="display:block;margin-top:2px"><path d="M4.5 1v10.5M2.3 8.5l2.2 3 2.2-3" stroke="#e8e8e8" stroke-width="1" fill="none"/></svg></div><div class="r" style="top:52px">108.5 mA</div><div class="l" style="top:67px"><svg width="8" height="13" viewBox="0 0 8 13" style="display:block;margin-top:2px"><path d="M4.5 13V1.5M2.3 4.5l2.2-3 2.2 3" stroke="#e8e8e8" stroke-width="1" fill="none"/></svg></div><div class="r" style="top:67px">172.5 mA</div><div style="position:absolute;left:-1px;top:-1px;right:-1.4px;bottom:0;border:2px solid #2a90f8"></div></div>
<div class="abs" style="left:404px;top:623px;width:95px;height:84px;border:1px dashed #e8e8e8"></div>
<div class="abs" style="left:445px;top:657px;width:13px;height:13px"><div class="abs" style="left:0;top:6px;width:13px;height:1.5px;background:#fff"></div><div class="abs" style="left:6px;top:0;width:1.5px;height:13px;background:#fff"></div></div>
<div class="pn" style="left:1003px;width:57.2px"><div class="hd" style="background:#00ff00;font-weight:bold;text-align:center;font-size:13.5px;line-height:17px">HD</div><div class="abs" style="left:0;width:57px;top:23px;text-align:center">12 Bits</div></div>
<div class="pn" style="left:1063px;width:112.2px"><div class="hd"><span class="l" style="top:0">Timebase</span><span class="r" style="top:0">0.00 s</span></div><span class="l" style="top:17px">Roll</span><span class="r" style="top:17px">1.00 s/div</span><span class="l" style="top:32px">50 MS</span><span class="r" style="top:32px">5 MS/s</span></div>
<div class="pn" style="left:1178px;width:97px"><div class="hd"><span class="l" style="top:0">Trigger</span><span class="tg" style="left:50px;width:19px">C3</span><span class="tg" style="left:72px;width:21.5px">DC</span></div><span class="l" style="top:17px">Stop</span><span class="r" style="top:17px">2.50 V</span><span class="l" style="top:32px">Edge</span><span class="r" style="top:32px">Positive</span></div>
<div class="abs" style="left:1009px;top:672.5px">X1=</div><div class="abs" style="right:164px;top:672.5px">4.9999998 s</div><div class="abs" style="left:1136px;top:672.5px">&Delta;X=</div><div class="abs" style="right:7px;top:672.5px">-9.9999998 s</div>
<div class="abs" style="left:1009px;top:689px">X2=</div><div class="abs" style="right:164px;top:689px">-5.0000000 s</div><div class="abs" style="left:1126px;top:689px">1/&Delta;X=</div><div class="abs" style="right:7px;top:689px">-100.000002 mHz</div>
</body></html>
